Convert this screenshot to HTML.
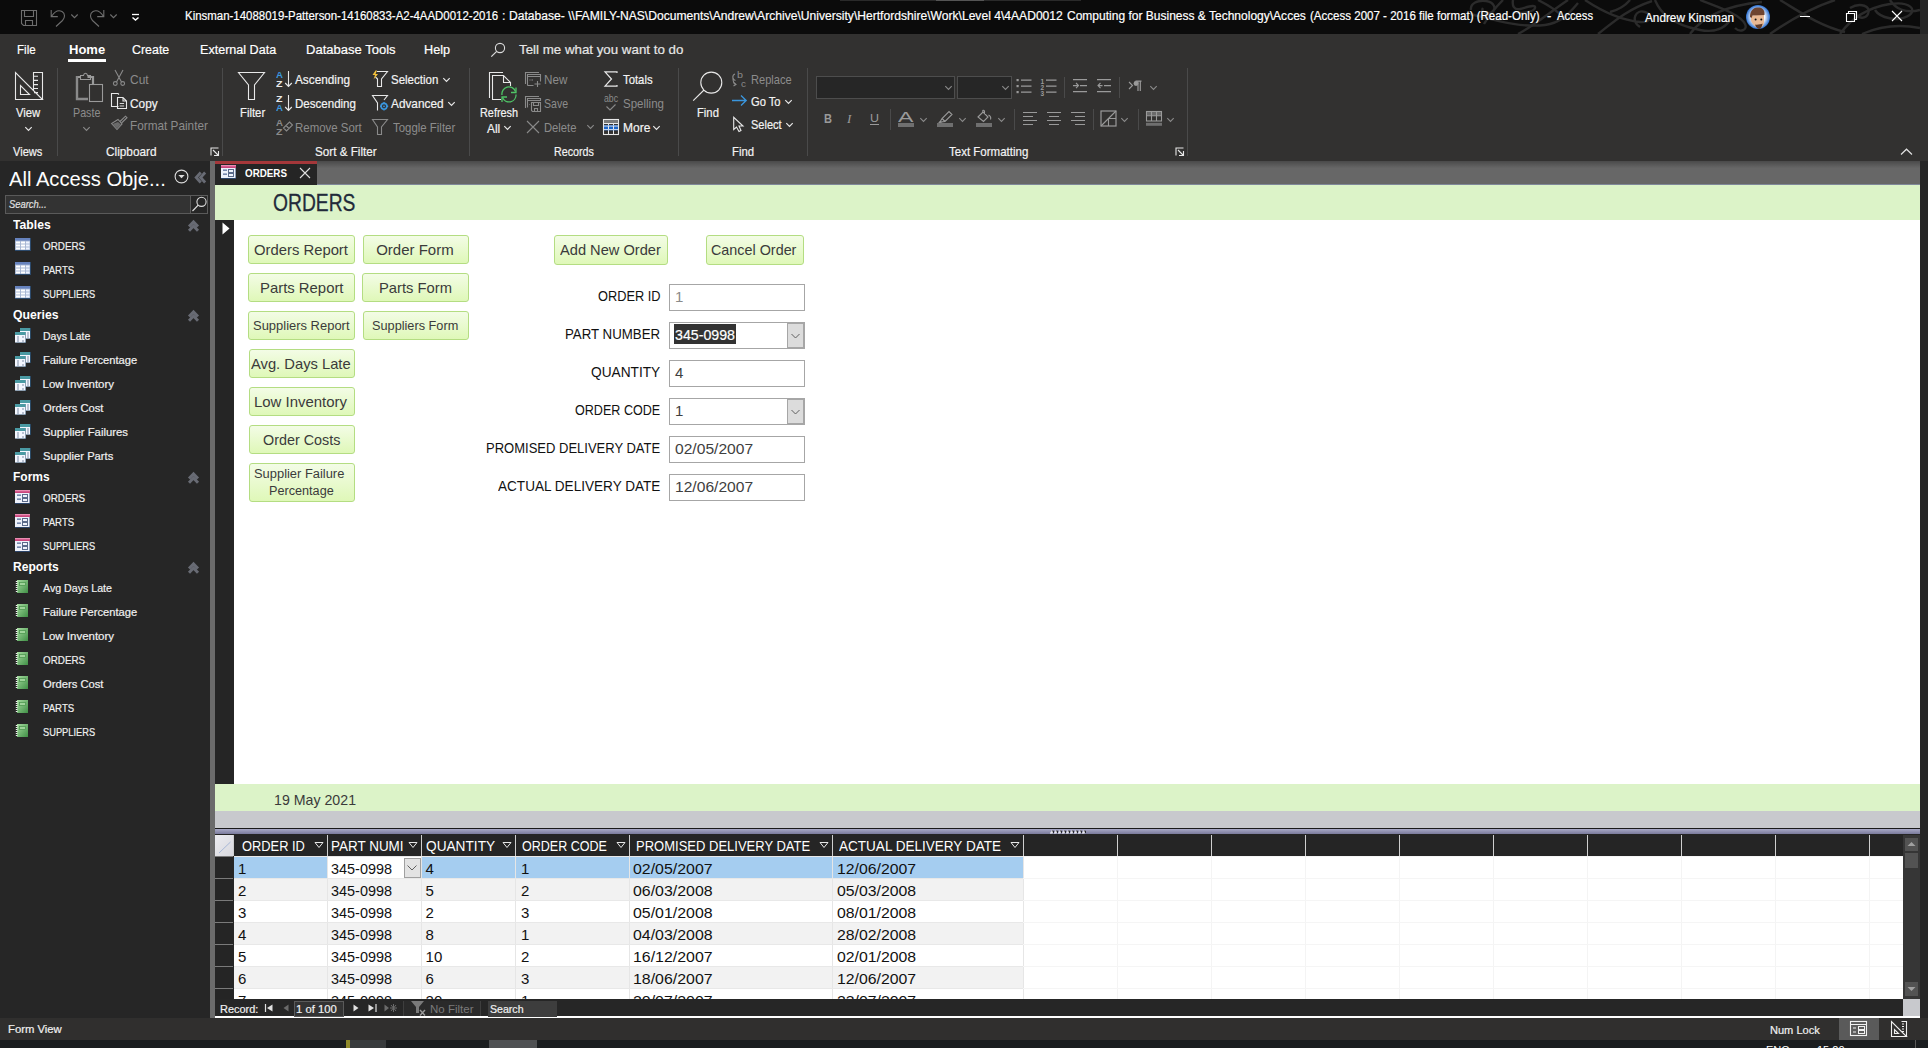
<!DOCTYPE html>
<html><head><meta charset="utf-8"><style>
html,body{margin:0;padding:0;width:1928px;height:1048px;overflow:hidden;background:#262626;}
body{position:relative;font-family:"Liberation Sans",sans-serif;}
.t{position:absolute;white-space:nowrap;line-height:1;transform-origin:0 0;}
.r{position:absolute;}
.s{position:absolute;overflow:visible;}
</style></head><body>
<div class="r" style="left:0px;top:0px;width:1920px;height:34px;background:#0b0b0b;"></div>
<div class="r" style="left:1920px;top:0px;width:8px;height:34px;background:#262626;"></div>
<div class="r" style="left:0px;top:34px;width:1928px;height:127px;background:#323130;"></div>
<div class="r" style="left:0px;top:161px;width:210px;height:857px;background:#262626;"></div>
<div class="r" style="left:210px;top:161px;width:5px;height:857px;background:#6b6b6b;"></div>
<div class="r" style="left:1920px;top:161px;width:8px;height:857px;background:#262626;"></div>
<div class="r" style="left:215px;top:161px;width:1705px;height:24px;background:linear-gradient(#4a4a4a,#676767 30%,#676767);"></div>
<div class="r" style="left:0px;top:1018px;width:1928px;height:22px;background:#302f2e;"></div>
<div class="r" style="left:0px;top:1040px;width:1928px;height:8px;background:#1b1e20;"></div>
<div class="r" style="left:346px;top:1040px;width:4px;height:8px;background:#8f8a2a;"></div>
<div class="r" style="left:350px;top:1040px;width:36px;height:8px;background:#383b3d;"></div>
<div class="r" style="left:489px;top:1040px;width:48px;height:8px;background:#4f5153;"></div>
<div class="r" style="left:1915px;top:1040px;width:1px;height:8px;background:#5a5a5a;"></div>
<div style="position:absolute;left:0;top:1040px;width:1928px;height:8px;overflow:hidden"><div class="t" style="left:1766px;top:5px;font-size:11px;color:#fff">ENG</div><div class="t" style="left:1817px;top:5px;font-size:11px;color:#fff">15:20</div></div>
<div class="r" style="left:840px;top:0px;width:241px;height:1px;background:#2a2a2a;"></div>
<div class="r" style="left:936px;top:0px;width:48px;height:1px;background:#555555;"></div>
<svg class="s" style="left:1420px;top:0px;overflow:hidden;" width="500" height="34" viewBox="0 0 500 34"><path d="M1471 10 C1470 3 1478 0 1486 1 C1494 2 1497 9 1492 12 C1488 15 1480 12 1483 8" transform="translate(-1420,0)" stroke="#2b2b2b" stroke-width="2.4" fill="none"/><path d="M1503 0 C1497 6 1490 14 1484 24" transform="translate(-1420,0)" stroke="#2b2b2b" stroke-width="2.4" fill="none"/><path d="M1470 14 C1495 20 1520 28 1545 25 C1560 23 1568 15 1578 3" transform="translate(-1420,0)" stroke="#2b2b2b" stroke-width="2.4" fill="none"/><path d="M1513 0 C1512 6 1514 10 1520 9 C1528 7 1536 4 1535 8 C1534 12 1522 14 1515 12" transform="translate(-1420,0)" stroke="#2b2b2b" stroke-width="2.4" fill="none"/><path d="M1518 34 C1535 25 1550 12 1568 0" transform="translate(-1420,0)" stroke="#2b2b2b" stroke-width="2.4" fill="none"/><path d="M1538 0 C1548 5 1556 10 1562 16" transform="translate(-1420,0)" stroke="#2b2b2b" stroke-width="2.4" fill="none"/><path d="M1585 0 C1600 10 1620 20 1640 22 C1650 23 1655 15 1645 12 C1636 9 1630 20 1640 27" transform="translate(-1420,0)" stroke="#2b2b2b" stroke-width="2.4" fill="none"/><path d="M1598 34 C1610 25 1625 10 1652 1" transform="translate(-1420,0)" stroke="#2b2b2b" stroke-width="2.4" fill="none"/><path d="M1655 0 C1660 12 1670 24 1700 30 C1715 33 1725 28 1730 20" transform="translate(-1420,0)" stroke="#2b2b2b" stroke-width="2.4" fill="none"/><path d="M1690 34 C1700 20 1720 6 1762 2" transform="translate(-1420,0)" stroke="#2b2b2b" stroke-width="2.4" fill="none"/><path d="M1700 0 C1720 8 1740 14 1745 24 C1748 30 1740 33 1735 28" transform="translate(-1420,0)" stroke="#2b2b2b" stroke-width="2.4" fill="none"/><path d="M1770 34 C1790 20 1810 8 1835 0" transform="translate(-1420,0)" stroke="#2b2b2b" stroke-width="2.4" fill="none"/><path d="M1780 0 C1800 12 1820 26 1845 32" transform="translate(-1420,0)" stroke="#2b2b2b" stroke-width="2.4" fill="none"/><path d="M1840 34 C1850 20 1865 8 1890 4 C1910 1 1918 10 1908 16 C1898 22 1880 18 1875 10" transform="translate(-1420,0)" stroke="#2b2b2b" stroke-width="2.4" fill="none"/><path d="M1850 8 C1860 2 1872 6 1868 14 C1865 20 1855 18 1856 12" transform="translate(-1420,0)" stroke="#2b2b2b" stroke-width="2.4" fill="none"/><path d="M1862 34 C1880 26 1900 24 1920 28" transform="translate(-1420,0)" stroke="#2b2b2b" stroke-width="2.4" fill="none"/><path d="M1890 0 C1895 8 1905 14 1920 10" transform="translate(-1420,0)" stroke="#2b2b2b" stroke-width="2.4" fill="none"/><path d="M1630 0 C1625 6 1618 10 1610 12" transform="translate(-1420,0)" stroke="#2b2b2b" stroke-width="2.4" fill="none"/></svg>
<div class="t" style="left:185.00px;top:10px;font-size:12.5px;color:#fff;transform:scaleX(0.9158);-webkit-text-stroke:0.2px currentColor;">Kinsman-14088019-Patterson-14160833-A2-4AAD0012-2016</div>
<div class="t" style="left:502.00px;top:10px;font-size:12.5px;color:#fff;-webkit-text-stroke:0.2px currentColor;">:</div>
<div class="t" style="left:508.90px;top:10px;font-size:12.5px;color:#fff;transform:scaleX(0.9678);-webkit-text-stroke:0.2px currentColor;">Database- \\FAMILY-NAS\Documents\Andrew\Archive\University\Hertfordshire\Work\Level 4\4AAD0012</div>
<div class="t" style="left:1066.80px;top:10px;font-size:12.5px;color:#fff;transform:scaleX(0.9610);-webkit-text-stroke:0.2px currentColor;">Computing for Business &amp; Technology\Acces</div>
<div class="t" style="left:1309.50px;top:10px;font-size:12.5px;color:#fff;transform:scaleX(0.9228);-webkit-text-stroke:0.2px currentColor;">(Access 2007 - 2016 file format) (Read-Only)</div>
<div class="t" style="left:1546.70px;top:10px;font-size:12.5px;color:#fff;transform:scaleX(1.0238);-webkit-text-stroke:0.2px currentColor;">-</div>
<div class="t" style="left:1557.00px;top:10px;font-size:12.5px;color:#fff;transform:scaleX(0.8933);-webkit-text-stroke:0.2px currentColor;">Access</div>
<div class="t" style="left:1645.00px;top:12px;font-size:12.5px;color:#fff;transform:scaleX(0.9418);-webkit-text-stroke:0.2px currentColor;">Andrew Kinsman</div>
<div class="t" style="left:17.00px;top:44px;font-size:12.5px;color:#fff;transform:scaleX(0.9254);-webkit-text-stroke:0.2px currentColor;">File</div>
<div class="t" style="left:68.50px;top:44px;font-size:12.5px;color:#fff;font-weight:bold;transform:scaleX(1.0403);">Home</div>
<div class="t" style="left:132.30px;top:44px;font-size:12.5px;color:#fff;transform:scaleX(0.9920);-webkit-text-stroke:0.2px currentColor;">Create</div>
<div class="t" style="left:200.30px;top:44px;font-size:12.5px;color:#fff;transform:scaleX(1.0053);-webkit-text-stroke:0.2px currentColor;">External Data</div>
<div class="t" style="left:306.00px;top:44px;font-size:12.5px;color:#fff;transform:scaleX(1.0419);-webkit-text-stroke:0.2px currentColor;">Database Tools</div>
<div class="t" style="left:424.00px;top:44px;font-size:12.5px;color:#fff;transform:scaleX(1.0117);-webkit-text-stroke:0.2px currentColor;">Help</div>
<div class="r" style="left:68px;top:59px;width:38px;height:3px;background:#fff;"></div>
<div class="t" style="left:519.20px;top:43px;font-size:13px;color:#e6e6e6;transform:scaleX(1.0243);-webkit-text-stroke:0.2px currentColor;">Tell me what you want to do</div>
<div class="t" style="left:16.20px;top:106px;font-size:13px;color:#f3f3f3;transform:scaleX(0.8683);-webkit-text-stroke:0.2px currentColor;">View</div>
<div class="t" style="left:13.00px;top:145px;font-size:13px;color:#f3f3f3;transform:scaleX(0.8517);-webkit-text-stroke:0.2px currentColor;">Views</div>
<div class="t" style="left:73.40px;top:106px;font-size:13px;color:#8c8c8c;transform:scaleX(0.8253);">Paste</div>
<div class="t" style="left:130.00px;top:73px;font-size:13px;color:#8c8c8c;transform:scaleX(0.9208);">Cut</div>
<div class="t" style="left:130.00px;top:97px;font-size:13px;color:#f3f3f3;transform:scaleX(0.9109);-webkit-text-stroke:0.2px currentColor;">Copy</div>
<div class="t" style="left:130.00px;top:119px;font-size:13px;color:#8c8c8c;transform:scaleX(0.9058);">Format Painter</div>
<div class="t" style="left:106.30px;top:145px;font-size:13px;color:#f3f3f3;transform:scaleX(0.9083);-webkit-text-stroke:0.2px currentColor;">Clipboard</div>
<div class="t" style="left:239.50px;top:106px;font-size:13px;color:#f3f3f3;transform:scaleX(0.8720);-webkit-text-stroke:0.2px currentColor;">Filter</div>
<div class="t" style="left:295.20px;top:73px;font-size:13px;color:#f3f3f3;transform:scaleX(0.9077);-webkit-text-stroke:0.2px currentColor;">Ascending</div>
<div class="t" style="left:295.20px;top:97px;font-size:13px;color:#f3f3f3;transform:scaleX(0.8879);-webkit-text-stroke:0.2px currentColor;">Descending</div>
<div class="t" style="left:295.20px;top:121px;font-size:13px;color:#8c8c8c;transform:scaleX(0.8801);">Remove Sort</div>
<div class="t" style="left:391.20px;top:73px;font-size:13px;color:#f3f3f3;transform:scaleX(0.8841);-webkit-text-stroke:0.2px currentColor;">Selection</div>
<div class="t" style="left:391.20px;top:97px;font-size:13px;color:#f3f3f3;transform:scaleX(0.9083);-webkit-text-stroke:0.2px currentColor;">Advanced</div>
<div class="t" style="left:392.50px;top:121px;font-size:13px;color:#8c8c8c;transform:scaleX(0.8785);">Toggle Filter</div>
<div class="t" style="left:315.30px;top:145px;font-size:13px;color:#f3f3f3;transform:scaleX(0.8980);-webkit-text-stroke:0.2px currentColor;">Sort &amp; Filter</div>
<div class="t" style="left:480.40px;top:106px;font-size:13px;color:#f3f3f3;transform:scaleX(0.8352);-webkit-text-stroke:0.2px currentColor;">Refresh</div>
<div class="t" style="left:487.20px;top:122px;font-size:13px;color:#f3f3f3;transform:scaleX(0.9167);-webkit-text-stroke:0.2px currentColor;">All</div>
<div class="t" style="left:544.30px;top:73px;font-size:13px;color:#8c8c8c;transform:scaleX(0.8966);">New</div>
<div class="t" style="left:544.30px;top:97px;font-size:13px;color:#8c8c8c;transform:scaleX(0.8108);">Save</div>
<div class="t" style="left:544.30px;top:121px;font-size:13px;color:#8c8c8c;transform:scaleX(0.8644);">Delete</div>
<div class="t" style="left:622.50px;top:73px;font-size:13px;color:#f3f3f3;transform:scaleX(0.8706);-webkit-text-stroke:0.2px currentColor;">Totals</div>
<div class="t" style="left:622.50px;top:97px;font-size:13px;color:#8c8c8c;transform:scaleX(0.8855);">Spelling</div>
<div class="t" style="left:622.50px;top:121px;font-size:13px;color:#f3f3f3;transform:scaleX(0.9223);-webkit-text-stroke:0.2px currentColor;">More</div>
<div class="t" style="left:553.80px;top:145px;font-size:13px;color:#f3f3f3;transform:scaleX(0.8244);-webkit-text-stroke:0.2px currentColor;">Records</div>
<div class="t" style="left:696.50px;top:106px;font-size:13px;color:#f3f3f3;transform:scaleX(0.8656);-webkit-text-stroke:0.2px currentColor;">Find</div>
<div class="t" style="left:751.30px;top:73px;font-size:13px;color:#8c8c8c;transform:scaleX(0.8512);">Replace</div>
<div class="t" style="left:751.30px;top:95px;font-size:13px;color:#f3f3f3;transform:scaleX(0.8580);-webkit-text-stroke:0.2px currentColor;">Go To</div>
<div class="t" style="left:751.30px;top:118px;font-size:13px;color:#f3f3f3;transform:scaleX(0.8476);-webkit-text-stroke:0.2px currentColor;">Select</div>
<div class="t" style="left:731.60px;top:145px;font-size:13px;color:#f3f3f3;transform:scaleX(0.8735);-webkit-text-stroke:0.2px currentColor;">Find</div>
<div class="t" style="left:949.20px;top:145px;font-size:13px;color:#f3f3f3;transform:scaleX(0.8850);-webkit-text-stroke:0.2px currentColor;">Text Formatting</div>
<div class="t" style="left:8.70px;top:168px;font-size:21px;color:#fefefe;transform:scaleX(0.9596);">All Access Obje...</div>
<div class="r" style="left:5px;top:195px;width:203px;height:19px;background:#333333;border:1px solid #5a5a5a;box-sizing:border-box;"></div>
<div class="t" style="left:8.50px;top:199px;font-size:11px;color:#e0e0e0;font-style:italic;transform:scaleX(0.8523);-webkit-text-stroke:0.2px currentColor;">Search...</div>
<div class="t" style="left:13.40px;top:218px;font-size:13px;color:#fff;font-weight:bold;transform:scaleX(0.9378);">Tables</div>
<div class="t" style="left:42.50px;top:241px;font-size:11.5px;color:#f0f0f0;transform:scaleX(0.8577);-webkit-text-stroke:0.2px currentColor;">ORDERS</div>
<div class="t" style="left:42.50px;top:265px;font-size:11.5px;color:#f0f0f0;transform:scaleX(0.8365);-webkit-text-stroke:0.2px currentColor;">PARTS</div>
<div class="t" style="left:42.50px;top:289px;font-size:11.5px;color:#f0f0f0;transform:scaleX(0.8065);-webkit-text-stroke:0.2px currentColor;">SUPPLIERS</div>
<div class="t" style="left:13.40px;top:308px;font-size:13px;color:#fff;font-weight:bold;transform:scaleX(0.9421);">Queries</div>
<div class="t" style="left:42.50px;top:331px;font-size:11.5px;color:#f0f0f0;transform:scaleX(0.9131);-webkit-text-stroke:0.2px currentColor;">Days Late</div>
<div class="t" style="left:42.50px;top:355px;font-size:11.5px;color:#f0f0f0;transform:scaleX(0.9691);-webkit-text-stroke:0.2px currentColor;">Failure Percentage</div>
<div class="t" style="left:42.50px;top:379px;font-size:11.5px;color:#f0f0f0;-webkit-text-stroke:0.2px currentColor;">Low Inventory</div>
<div class="t" style="left:42.50px;top:403px;font-size:11.5px;color:#f0f0f0;transform:scaleX(0.9758);-webkit-text-stroke:0.2px currentColor;">Orders Cost</div>
<div class="t" style="left:42.50px;top:427px;font-size:11.5px;color:#f0f0f0;transform:scaleX(0.9849);-webkit-text-stroke:0.2px currentColor;">Supplier Failures</div>
<div class="t" style="left:42.50px;top:451px;font-size:11.5px;color:#f0f0f0;transform:scaleX(0.9723);-webkit-text-stroke:0.2px currentColor;">Supplier Parts</div>
<div class="t" style="left:13.40px;top:470px;font-size:13px;color:#fff;font-weight:bold;transform:scaleX(0.9219);">Forms</div>
<div class="t" style="left:42.50px;top:493px;font-size:11.5px;color:#f0f0f0;transform:scaleX(0.8577);-webkit-text-stroke:0.2px currentColor;">ORDERS</div>
<div class="t" style="left:42.50px;top:517px;font-size:11.5px;color:#f0f0f0;transform:scaleX(0.8365);-webkit-text-stroke:0.2px currentColor;">PARTS</div>
<div class="t" style="left:42.50px;top:541px;font-size:11.5px;color:#f0f0f0;transform:scaleX(0.8065);-webkit-text-stroke:0.2px currentColor;">SUPPLIERS</div>
<div class="t" style="left:13.40px;top:560px;font-size:13px;color:#fff;font-weight:bold;transform:scaleX(0.9287);">Reports</div>
<div class="t" style="left:42.50px;top:583px;font-size:11.5px;color:#f0f0f0;transform:scaleX(0.9249);-webkit-text-stroke:0.2px currentColor;">Avg Days Late</div>
<div class="t" style="left:42.50px;top:607px;font-size:11.5px;color:#f0f0f0;transform:scaleX(0.9691);-webkit-text-stroke:0.2px currentColor;">Failure Percentage</div>
<div class="t" style="left:42.50px;top:631px;font-size:11.5px;color:#f0f0f0;-webkit-text-stroke:0.2px currentColor;">Low Inventory</div>
<div class="t" style="left:42.50px;top:655px;font-size:11.5px;color:#f0f0f0;transform:scaleX(0.8577);-webkit-text-stroke:0.2px currentColor;">ORDERS</div>
<div class="t" style="left:42.50px;top:679px;font-size:11.5px;color:#f0f0f0;transform:scaleX(0.9758);-webkit-text-stroke:0.2px currentColor;">Orders Cost</div>
<div class="t" style="left:42.50px;top:703px;font-size:11.5px;color:#f0f0f0;transform:scaleX(0.8365);-webkit-text-stroke:0.2px currentColor;">PARTS</div>
<div class="t" style="left:42.50px;top:727px;font-size:11.5px;color:#f0f0f0;transform:scaleX(0.8065);-webkit-text-stroke:0.2px currentColor;">SUPPLIERS</div>
<div class="r" style="left:215px;top:161px;width:102px;height:3px;background:#a4373a;"></div>
<div class="r" style="left:317px;top:184px;width:1603px;height:1px;background:#80889a;"></div>
<div class="r" style="left:215px;top:164px;width:102px;height:21px;background:#252525;"></div>
<div class="t" style="left:245.00px;top:168px;font-size:11px;color:#fff;font-weight:bold;transform:scaleX(0.8917);">ORDERS</div>
<div class="r" style="left:215px;top:185px;width:1705px;height:35px;background:#dcf3c8;"></div>
<div class="r" style="left:215px;top:220px;width:1705px;height:564px;background:#ffffff;"></div>
<div class="r" style="left:215px;top:220px;width:19px;height:564px;background:#252525;"></div>
<div class="t" style="left:272.70px;top:192px;font-size:23px;color:#222a3a;transform:scaleX(0.8374);-webkit-text-stroke:0.3px currentColor;">ORDERS</div>
<div class="r" style="left:215px;top:784px;width:1705px;height:27px;background:#dcf3c8;"></div>
<div class="t" style="left:274.00px;top:792px;font-size:15px;color:#3a3a3a;transform:scaleX(0.9458);">19 May 2021</div>
<div class="r" style="left:215px;top:811px;width:1705px;height:17px;background:#c8c9cd;"></div>
<div class="r" style="left:215px;top:828px;width:1705px;height:1px;background:#1a1a1a;"></div>
<div class="r" style="left:215px;top:829px;width:1705px;height:5px;background:linear-gradient(#a9a9c6,#7a7b9c);"></div>
<div class="r" style="left:248px;top:235px;width:107px;height:29px;background:linear-gradient(#f3fce6,#dff8b8);border:1px solid #b4dd82;border-radius:3px;box-sizing:border-box;"></div>
<div class="t" style="left:254.30px;top:242px;font-size:15px;color:#3b3b3b;transform:scaleX(0.9884);">Orders Report</div>
<div class="r" style="left:363px;top:235px;width:106px;height:29px;background:linear-gradient(#f3fce6,#dff8b8);border:1px solid #b4dd82;border-radius:3px;box-sizing:border-box;"></div>
<div class="t" style="left:376.20px;top:242px;font-size:15px;color:#3b3b3b;">Order Form</div>
<div class="r" style="left:248px;top:273px;width:107px;height:29px;background:linear-gradient(#f3fce6,#dff8b8);border:1px solid #b4dd82;border-radius:3px;box-sizing:border-box;"></div>
<div class="t" style="left:259.50px;top:280px;font-size:15px;color:#3b3b3b;transform:scaleX(0.9917);">Parts Report</div>
<div class="r" style="left:362px;top:273px;width:107px;height:29px;background:linear-gradient(#f3fce6,#dff8b8);border:1px solid #b4dd82;border-radius:3px;box-sizing:border-box;"></div>
<div class="t" style="left:378.50px;top:280px;font-size:15px;color:#3b3b3b;transform:scaleX(0.9838);">Parts Form</div>
<div class="r" style="left:248px;top:311px;width:107px;height:29px;background:linear-gradient(#f3fce6,#dff8b8);border:1px solid #b4dd82;border-radius:3px;box-sizing:border-box;"></div>
<div class="t" style="left:253.00px;top:320px;font-size:12.5px;color:#3b3b3b;transform:scaleX(1.0365);">Suppliers Report</div>
<div class="r" style="left:363px;top:311px;width:106px;height:29px;background:linear-gradient(#f3fce6,#dff8b8);border:1px solid #b4dd82;border-radius:3px;box-sizing:border-box;"></div>
<div class="t" style="left:372.30px;top:320px;font-size:12.5px;color:#3b3b3b;transform:scaleX(1.0177);">Suppliers Form</div>
<div class="r" style="left:249px;top:349px;width:106px;height:29px;background:linear-gradient(#f3fce6,#dff8b8);border:1px solid #b4dd82;border-radius:3px;box-sizing:border-box;"></div>
<div class="t" style="left:251.40px;top:356.2px;font-size:15px;color:#3b3b3b;transform:scaleX(0.9822);">Avg. Days Late</div>
<div class="r" style="left:249px;top:387px;width:106px;height:29px;background:linear-gradient(#f3fce6,#dff8b8);border:1px solid #b4dd82;border-radius:3px;box-sizing:border-box;"></div>
<div class="t" style="left:254.00px;top:394px;font-size:15px;color:#3b3b3b;transform:scaleX(0.9957);">Low Inventory</div>
<div class="r" style="left:249px;top:425px;width:106px;height:29px;background:linear-gradient(#f3fce6,#dff8b8);border:1px solid #b4dd82;border-radius:3px;box-sizing:border-box;"></div>
<div class="t" style="left:262.50px;top:432px;font-size:15px;color:#3b3b3b;transform:scaleX(0.9580);">Order Costs</div>
<div class="r" style="left:249px;top:463px;width:106px;height:39px;background:linear-gradient(#f3fce6,#dff8b8);border:1px solid #b4dd82;border-radius:3px;box-sizing:border-box;"></div>
<div class="t" style="left:254.30px;top:468px;font-size:12.5px;color:#3b3b3b;transform:scaleX(1.0320);">Supplier Failure</div>
<div class="t" style="left:269.00px;top:485px;font-size:12.5px;color:#3b3b3b;transform:scaleX(1.0125);">Percentage</div>
<div class="r" style="left:554px;top:235px;width:114px;height:30px;background:linear-gradient(#f3fce6,#dff8b8);border:1px solid #b4dd82;border-radius:3px;box-sizing:border-box;"></div>
<div class="t" style="left:559.60px;top:242.2px;font-size:15px;color:#3b3b3b;transform:scaleX(0.9758);">Add New Order</div>
<div class="r" style="left:706px;top:235px;width:98px;height:30px;background:linear-gradient(#f3fce6,#dff8b8);border:1px solid #b4dd82;border-radius:3px;box-sizing:border-box;"></div>
<div class="t" style="left:711.40px;top:242.2px;font-size:15px;color:#3b3b3b;transform:scaleX(0.9574);">Cancel Order</div>
<div class="r" style="left:669px;top:284px;width:136px;height:27px;background:#fff;border:1px solid #a6a6a6;box-sizing:border-box;"></div>
<div class="t" style="left:598.00px;top:288px;font-size:15px;color:#111;transform:scaleX(0.8527);">ORDER ID</div>
<div class="t" style="left:675.00px;top:289px;font-size:15px;color:#8a8a8a;">1</div>
<div class="r" style="left:669px;top:322px;width:136px;height:27px;background:#fff;border:1px solid #a6a6a6;box-sizing:border-box;"></div>
<div class="t" style="left:565.40px;top:326px;font-size:15px;color:#111;transform:scaleX(0.8847);">PART NUMBER</div>
<div class="r" style="left:787px;top:323px;width:17px;height:25px;background:#dcdcdc;border:1px solid #a6a6a6;box-sizing:border-box;"></div>
<svg class="s" style="left:790px;top:332px;" width="11" height="8" viewBox="0 0 11 8"><path d="M1.5 2 L5.5 6 L9.5 2" stroke="#606060" stroke-width="1" fill="none"/></svg>
<div class="r" style="left:674px;top:324px;width:62px;height:20px;background:#333;"></div>
<div class="t" style="left:675.00px;top:327px;font-size:15px;color:#fff;transform:scaleX(0.9464);-webkit-text-stroke:0.2px currentColor;">345-0998</div>
<div class="r" style="left:669px;top:360px;width:136px;height:27px;background:#fff;border:1px solid #a6a6a6;box-sizing:border-box;"></div>
<div class="t" style="left:591.30px;top:364px;font-size:15px;color:#111;transform:scaleX(0.9129);">QUANTITY</div>
<div class="t" style="left:675.00px;top:365px;font-size:15px;color:#404040;">4</div>
<div class="r" style="left:669px;top:398px;width:136px;height:27px;background:#fff;border:1px solid #a6a6a6;box-sizing:border-box;"></div>
<div class="t" style="left:575.30px;top:402px;font-size:15px;color:#111;transform:scaleX(0.8378);">ORDER CODE</div>
<div class="r" style="left:787px;top:399px;width:17px;height:25px;background:#dcdcdc;border:1px solid #a6a6a6;box-sizing:border-box;"></div>
<svg class="s" style="left:790px;top:408px;" width="11" height="8" viewBox="0 0 11 8"><path d="M1.5 2 L5.5 6 L9.5 2" stroke="#606060" stroke-width="1" fill="none"/></svg>
<div class="t" style="left:675.00px;top:403px;font-size:15px;color:#404040;">1</div>
<div class="r" style="left:669px;top:436px;width:136px;height:27px;background:#fff;border:1px solid #a6a6a6;box-sizing:border-box;"></div>
<div class="t" style="left:486.30px;top:440px;font-size:15px;color:#111;transform:scaleX(0.8671);">PROMISED DELIVERY DATE</div>
<div class="t" style="left:675.00px;top:441px;font-size:15px;color:#404040;transform:scaleX(1.0413);">02/05/2007</div>
<div class="r" style="left:669px;top:474px;width:136px;height:27px;background:#fff;border:1px solid #a6a6a6;box-sizing:border-box;"></div>
<div class="t" style="left:498.10px;top:478px;font-size:15px;color:#111;transform:scaleX(0.9047);">ACTUAL DELIVERY DATE</div>
<div class="t" style="left:675.00px;top:479px;font-size:15px;color:#404040;transform:scaleX(1.0413);">12/06/2007</div>
<div class="r" style="left:215px;top:834px;width:1688px;height:22px;background:#252525;"></div>
<div class="r" style="left:215px;top:835px;width:19px;height:21px;background:linear-gradient(135deg,#ececf0,#d8d8de);"></div>
<div class="r" style="left:234px;top:856px;width:1669px;height:143px;background:#ffffff;"></div>
<div class="r" style="left:234px;top:857px;width:789px;height:21px;background:#a5cdf0;"></div>
<div class="r" style="left:328px;top:857px;width:93px;height:21px;background:#fff;"></div>
<div class="r" style="left:215px;top:857px;width:18px;height:21px;background:#252525;"></div>
<div class="r" style="left:215px;top:856px;width:18px;height:1px;background:#7a7a7a;"></div>
<div class="r" style="left:234px;top:879px;width:789px;height:21px;background:#f2f2f2;"></div>
<div class="r" style="left:215px;top:879px;width:18px;height:21px;background:#252525;"></div>
<div class="r" style="left:215px;top:878px;width:18px;height:1px;background:#7a7a7a;"></div>
<div class="r" style="left:215px;top:901px;width:18px;height:21px;background:#252525;"></div>
<div class="r" style="left:215px;top:900px;width:18px;height:1px;background:#7a7a7a;"></div>
<div class="r" style="left:234px;top:923px;width:789px;height:21px;background:#f2f2f2;"></div>
<div class="r" style="left:215px;top:923px;width:18px;height:21px;background:#252525;"></div>
<div class="r" style="left:215px;top:922px;width:18px;height:1px;background:#7a7a7a;"></div>
<div class="r" style="left:215px;top:945px;width:18px;height:21px;background:#252525;"></div>
<div class="r" style="left:215px;top:944px;width:18px;height:1px;background:#7a7a7a;"></div>
<div class="r" style="left:234px;top:967px;width:789px;height:21px;background:#f2f2f2;"></div>
<div class="r" style="left:215px;top:967px;width:18px;height:21px;background:#252525;"></div>
<div class="r" style="left:215px;top:966px;width:18px;height:1px;background:#7a7a7a;"></div>
<div class="r" style="left:215px;top:989px;width:18px;height:10px;background:#252525;"></div>
<div class="r" style="left:215px;top:988px;width:18px;height:1px;background:#7a7a7a;"></div>
<div class="t" style="left:238.00px;top:861px;font-size:15px;color:#111;">1</div>
<div class="t" style="left:331.40px;top:861px;font-size:15px;color:#111;transform:scaleX(0.9621);">345-0998</div>
<div class="t" style="left:425.60px;top:861px;font-size:15px;color:#111;">4</div>
<div class="t" style="left:521.00px;top:861px;font-size:15px;color:#111;">1</div>
<div class="t" style="left:633.00px;top:861px;font-size:15px;color:#111;transform:scaleX(1.0599);">02/05/2007</div>
<div class="t" style="left:836.60px;top:861px;font-size:15px;color:#111;transform:scaleX(1.0533);">12/06/2007</div>
<div class="t" style="left:238.00px;top:883px;font-size:15px;color:#111;">2</div>
<div class="t" style="left:331.40px;top:883px;font-size:15px;color:#111;transform:scaleX(0.9621);">345-0998</div>
<div class="t" style="left:425.60px;top:883px;font-size:15px;color:#111;">5</div>
<div class="t" style="left:521.00px;top:883px;font-size:15px;color:#111;">2</div>
<div class="t" style="left:633.00px;top:883px;font-size:15px;color:#111;transform:scaleX(1.0599);">06/03/2008</div>
<div class="t" style="left:836.60px;top:883px;font-size:15px;color:#111;transform:scaleX(1.0533);">05/03/2008</div>
<div class="t" style="left:238.00px;top:905px;font-size:15px;color:#111;">3</div>
<div class="t" style="left:331.40px;top:905px;font-size:15px;color:#111;transform:scaleX(0.9621);">345-0998</div>
<div class="t" style="left:425.60px;top:905px;font-size:15px;color:#111;">2</div>
<div class="t" style="left:521.00px;top:905px;font-size:15px;color:#111;">3</div>
<div class="t" style="left:633.00px;top:905px;font-size:15px;color:#111;transform:scaleX(1.0599);">05/01/2008</div>
<div class="t" style="left:836.60px;top:905px;font-size:15px;color:#111;transform:scaleX(1.0533);">08/01/2008</div>
<div class="t" style="left:238.00px;top:927px;font-size:15px;color:#111;">4</div>
<div class="t" style="left:331.40px;top:927px;font-size:15px;color:#111;transform:scaleX(0.9621);">345-0998</div>
<div class="t" style="left:425.60px;top:927px;font-size:15px;color:#111;">8</div>
<div class="t" style="left:521.00px;top:927px;font-size:15px;color:#111;">1</div>
<div class="t" style="left:633.00px;top:927px;font-size:15px;color:#111;transform:scaleX(1.0599);">04/03/2008</div>
<div class="t" style="left:836.60px;top:927px;font-size:15px;color:#111;transform:scaleX(1.0533);">28/02/2008</div>
<div class="t" style="left:238.00px;top:949px;font-size:15px;color:#111;">5</div>
<div class="t" style="left:331.40px;top:949px;font-size:15px;color:#111;transform:scaleX(0.9621);">345-0998</div>
<div class="t" style="left:425.60px;top:949px;font-size:15px;color:#111;">10</div>
<div class="t" style="left:521.00px;top:949px;font-size:15px;color:#111;">2</div>
<div class="t" style="left:633.00px;top:949px;font-size:15px;color:#111;transform:scaleX(1.0599);">16/12/2007</div>
<div class="t" style="left:836.60px;top:949px;font-size:15px;color:#111;transform:scaleX(1.0533);">02/01/2008</div>
<div class="t" style="left:238.00px;top:971px;font-size:15px;color:#111;">6</div>
<div class="t" style="left:331.40px;top:971px;font-size:15px;color:#111;transform:scaleX(0.9621);">345-0998</div>
<div class="t" style="left:425.60px;top:971px;font-size:15px;color:#111;">6</div>
<div class="t" style="left:521.00px;top:971px;font-size:15px;color:#111;">3</div>
<div class="t" style="left:633.00px;top:971px;font-size:15px;color:#111;transform:scaleX(1.0599);">18/06/2007</div>
<div class="t" style="left:836.60px;top:971px;font-size:15px;color:#111;transform:scaleX(1.0533);">12/06/2007</div>
<div class="t" style="left:238.00px;top:993px;font-size:15px;color:#111;">7</div>
<div class="t" style="left:331.40px;top:993px;font-size:15px;color:#111;transform:scaleX(0.9621);">345-0998</div>
<div class="t" style="left:425.60px;top:993px;font-size:15px;color:#111;">20</div>
<div class="t" style="left:521.00px;top:993px;font-size:15px;color:#111;">1</div>
<div class="t" style="left:633.00px;top:993px;font-size:15px;color:#111;transform:scaleX(1.0599);">20/07/2007</div>
<div class="t" style="left:836.60px;top:993px;font-size:15px;color:#111;transform:scaleX(1.0533);">23/07/2007</div>
<div class="r" style="left:327px;top:856px;width:1px;height:143px;background:#e6e6e6;"></div>
<div class="r" style="left:421px;top:856px;width:1px;height:143px;background:#e6e6e6;"></div>
<div class="r" style="left:515px;top:856px;width:1px;height:143px;background:#e6e6e6;"></div>
<div class="r" style="left:629px;top:856px;width:1px;height:143px;background:#e6e6e6;"></div>
<div class="r" style="left:832px;top:856px;width:1px;height:143px;background:#e6e6e6;"></div>
<div class="r" style="left:1023px;top:856px;width:1px;height:143px;background:#e6e6e6;"></div>
<div class="r" style="left:1117px;top:856px;width:1px;height:143px;background:#f4f4f4;"></div>
<div class="r" style="left:1211px;top:856px;width:1px;height:143px;background:#f4f4f4;"></div>
<div class="r" style="left:1305px;top:856px;width:1px;height:143px;background:#f4f4f4;"></div>
<div class="r" style="left:1399px;top:856px;width:1px;height:143px;background:#f4f4f4;"></div>
<div class="r" style="left:1493px;top:856px;width:1px;height:143px;background:#f4f4f4;"></div>
<div class="r" style="left:1587px;top:856px;width:1px;height:143px;background:#f4f4f4;"></div>
<div class="r" style="left:1681px;top:856px;width:1px;height:143px;background:#f4f4f4;"></div>
<div class="r" style="left:1775px;top:856px;width:1px;height:143px;background:#f4f4f4;"></div>
<div class="r" style="left:1869px;top:856px;width:1px;height:143px;background:#f4f4f4;"></div>
<div class="r" style="left:234px;top:856px;width:789px;height:1px;background:#e8e8e8;"></div>
<div class="r" style="left:1023px;top:856px;width:880px;height:1px;background:#f5f5f5;"></div>
<div class="r" style="left:234px;top:878px;width:789px;height:1px;background:#e8e8e8;"></div>
<div class="r" style="left:1023px;top:878px;width:880px;height:1px;background:#f5f5f5;"></div>
<div class="r" style="left:234px;top:900px;width:789px;height:1px;background:#e8e8e8;"></div>
<div class="r" style="left:1023px;top:900px;width:880px;height:1px;background:#f5f5f5;"></div>
<div class="r" style="left:234px;top:922px;width:789px;height:1px;background:#e8e8e8;"></div>
<div class="r" style="left:1023px;top:922px;width:880px;height:1px;background:#f5f5f5;"></div>
<div class="r" style="left:234px;top:944px;width:789px;height:1px;background:#e8e8e8;"></div>
<div class="r" style="left:1023px;top:944px;width:880px;height:1px;background:#f5f5f5;"></div>
<div class="r" style="left:234px;top:966px;width:789px;height:1px;background:#e8e8e8;"></div>
<div class="r" style="left:1023px;top:966px;width:880px;height:1px;background:#f5f5f5;"></div>
<div class="r" style="left:234px;top:988px;width:789px;height:1px;background:#e8e8e8;"></div>
<div class="r" style="left:1023px;top:988px;width:880px;height:1px;background:#f5f5f5;"></div>
<div class="t" style="left:242.30px;top:839px;font-size:14.5px;color:#fefefe;transform:scaleX(0.8872);">ORDER ID</div>
<div class="t" style="left:331.40px;top:839px;font-size:14.5px;color:#fefefe;transform:scaleX(0.9284);">PART NUMI</div>
<div class="t" style="left:426.20px;top:839px;font-size:14.5px;color:#fefefe;transform:scaleX(0.9427);">QUANTITY</div>
<div class="t" style="left:522.30px;top:839px;font-size:14.5px;color:#fefefe;transform:scaleX(0.8647);">ORDER CODE</div>
<div class="t" style="left:636.20px;top:839px;font-size:14.5px;color:#fefefe;transform:scaleX(0.8970);">PROMISED DELIVERY DATE</div>
<div class="t" style="left:839.00px;top:839px;font-size:14.5px;color:#fefefe;transform:scaleX(0.9337);">ACTUAL DELIVERY DATE</div>
<div class="r" style="left:233px;top:835px;width:1px;height:21px;background:#cfcfcf;"></div>
<div class="r" style="left:327px;top:835px;width:1px;height:21px;background:#cfcfcf;"></div>
<div class="r" style="left:421px;top:835px;width:1px;height:21px;background:#cfcfcf;"></div>
<div class="r" style="left:515px;top:835px;width:1px;height:21px;background:#cfcfcf;"></div>
<div class="r" style="left:629px;top:835px;width:1px;height:21px;background:#cfcfcf;"></div>
<div class="r" style="left:832px;top:835px;width:1px;height:21px;background:#cfcfcf;"></div>
<div class="r" style="left:1023px;top:835px;width:1px;height:21px;background:#cfcfcf;"></div>
<div class="r" style="left:1117px;top:835px;width:1px;height:21px;background:#cfcfcf;"></div>
<div class="r" style="left:1211px;top:835px;width:1px;height:21px;background:#cfcfcf;"></div>
<div class="r" style="left:1305px;top:835px;width:1px;height:21px;background:#cfcfcf;"></div>
<div class="r" style="left:1399px;top:835px;width:1px;height:21px;background:#cfcfcf;"></div>
<div class="r" style="left:1493px;top:835px;width:1px;height:21px;background:#cfcfcf;"></div>
<div class="r" style="left:1587px;top:835px;width:1px;height:21px;background:#cfcfcf;"></div>
<div class="r" style="left:1681px;top:835px;width:1px;height:21px;background:#cfcfcf;"></div>
<div class="r" style="left:1775px;top:835px;width:1px;height:21px;background:#cfcfcf;"></div>
<div class="r" style="left:1869px;top:835px;width:1px;height:21px;background:#cfcfcf;"></div>
<div class="r" style="left:215px;top:999px;width:1705px;height:17px;background:#262626;"></div>
<div class="r" style="left:215px;top:1016px;width:1705px;height:2px;background:#ffffff;"></div>
<div class="r" style="left:1903px;top:834px;width:17px;height:165px;background:#3a3a3a;"></div>
<div class="t" style="left:220.00px;top:1004px;font-size:11px;color:#f0f0f0;transform:scaleX(0.9948);-webkit-text-stroke:0.2px currentColor;">Record:</div>
<div class="r" style="left:294px;top:1001px;width:50px;height:16px;background:#333;border:1px solid #5a5a5a;box-sizing:border-box;"></div>
<div class="t" style="left:296.30px;top:1004px;font-size:11px;color:#f0f0f0;transform:scaleX(1.0226);-webkit-text-stroke:0.2px currentColor;">1 of 100</div>
<div class="r" style="left:404px;top:1001px;width:76px;height:15px;background:#2a2a2a;"></div>
<div class="t" style="left:429.50px;top:1004px;font-size:11px;color:#7a7a7a;transform:scaleX(1.0457);">No Filter</div>
<div class="r" style="left:488px;top:1001px;width:69px;height:16px;background:#3d3d3d;"></div>
<div class="t" style="left:490.20px;top:1004px;font-size:11px;color:#f0f0f0;transform:scaleX(0.9628);-webkit-text-stroke:0.2px currentColor;">Search</div>
<div class="r" style="left:1903px;top:999px;width:17px;height:17px;background:#c8c9cd;"></div>
<div class="t" style="left:7.80px;top:1024px;font-size:11px;color:#f0f0f0;transform:scaleX(1.0267);-webkit-text-stroke:0.2px currentColor;">Form View</div>
<div class="t" style="left:1769.80px;top:1025px;font-size:11px;color:#f0f0f0;transform:scaleX(1.0040);-webkit-text-stroke:0.2px currentColor;">Num Lock</div>
<div class="r" style="left:1839px;top:1018px;width:40px;height:22px;background:#5a5a5a;"></div>
<svg class="s" style="left:20px;top:9px;" width="18" height="18" viewBox="0 0 18 18"><path d="M1.5 1.5 H16.5 V16.5 H3.5 L1.5 14.5 Z M4.5 1.5 V7.5 H13.5 V1.5 M5.5 16.5 V11.5 H12.5 V16.5" stroke="#6e6e6e" stroke-width="1.1" fill="none"/></svg>
<svg class="s" style="left:50px;top:9px;" width="16" height="18" viewBox="0 0 16 18"><path d="M1.2 1 V7.6 H7.8 M1.6 7.2 C4 3.5 8 0.5 12 2.5 C15.5 4.5 15 9 12.5 11.5 L6 17.5" stroke="#6e6e6e" stroke-width="1.1" fill="none"/></svg>
<svg class="s" style="left:70px;top:13px;" width="9" height="7" viewBox="0 0 9 7"><path d="M1.3 1.5 L4.5 4.7 L7.7 1.5" stroke="#6e6e6e" stroke-width="1.1" fill="none"/></svg>
<svg class="s" style="left:89px;top:9px;" width="16" height="18" viewBox="0 0 16 18"><path d="M14.8 1 V7.6 H8.2 M14.4 7.2 C12 3.5 8 0.5 4 2.5 C0.5 4.5 1 9 3.5 11.5 L10 17.5" stroke="#6e6e6e" stroke-width="1.1" fill="none"/></svg>
<svg class="s" style="left:109px;top:13px;" width="9" height="7" viewBox="0 0 9 7"><path d="M1.3 1.5 L4.5 4.7 L7.7 1.5" stroke="#6e6e6e" stroke-width="1.1" fill="none"/></svg>
<svg class="s" style="left:131px;top:12px;" width="9" height="9" viewBox="0 0 9 9"><path d="M1 2.5 H8" stroke="#fff" stroke-width="1.3"/><path d="M1.5 5.5 L4.5 8 L7.5 5.5" stroke="#fff" stroke-width="1.5" fill="none"/></svg>
<svg class="s" style="left:1746px;top:5px;" width="24" height="24" viewBox="0 0 24 24"><defs><radialGradient id="av" cx="50%" cy="50%" r="50%"><stop offset="55%" stop-color="#f4f8ff"/><stop offset="100%" stop-color="#2a6fd0"/></radialGradient></defs><circle cx="12" cy="12" r="12" fill="url(#av)"/><path d="M5 11 L18 8.5 V18 C17 21 15 23.5 13 23.5 C10 22.5 7 20 5 16 Z" fill="#e9b994"/><path d="M4 12 C4 6 7 3 11 2.5 C15 2 18.5 4 18.5 8 L18.5 10 L6.5 10.5 L5.5 13 Z" fill="#6e4430"/><path d="M9 19.5 C10 23 12 24 13.5 24 C15 23.5 16.5 21 16.5 18.5 C15 19.5 11 20 9 19.5Z" fill="#5e3a28"/><circle cx="9.6" cy="14.5" r="1" fill="#111"/><circle cx="15.3" cy="14.5" r="1" fill="#111"/></svg>
<div class="r" style="left:1800px;top:16px;width:10px;height:1px;background:#fff;"></div>
<svg class="s" style="left:1845px;top:10px;" width="13" height="12" viewBox="0 0 13 12"><path d="M3.5 3.5 V1.5 H11.5 V9.5 H9.5 M1.5 3.5 H9.5 V11.5 H1.5 Z" stroke="#fff" stroke-width="1.1" fill="none"/></svg>
<svg class="s" style="left:1891px;top:10px;" width="12" height="12" viewBox="0 0 12 12"><path d="M1 1 L11 11 M11 1 L1 11" stroke="#fff" stroke-width="1.1"/></svg>
<div class="r" style="left:57px;top:68px;width:1px;height:88px;background:#4a4a4a;"></div>
<div class="r" style="left:222px;top:68px;width:1px;height:88px;background:#4a4a4a;"></div>
<div class="r" style="left:469px;top:68px;width:1px;height:88px;background:#4a4a4a;"></div>
<div class="r" style="left:678px;top:68px;width:1px;height:88px;background:#4a4a4a;"></div>
<div class="r" style="left:807px;top:68px;width:1px;height:88px;background:#4a4a4a;"></div>
<div class="r" style="left:1187px;top:68px;width:1px;height:88px;background:#4a4a4a;"></div>
<svg class="s" style="left:490px;top:42px;" width="16" height="16" viewBox="0 0 16 16"><circle cx="10" cy="6" r="4.6" stroke="#dcdcdc" stroke-width="1.1" fill="none"/><path d="M6.7 9.3 L1.3 14.7" stroke="#dcdcdc" stroke-width="1.2"/></svg>
<svg class="s" style="left:14px;top:71px;" width="30" height="30" viewBox="0 0 30 30"><path d="M1.5 1.5 V28.5 H28.5 Z M6.5 14.5 V23.5 H15.5 Z M19.5 19.5 V1.5 H28.5 V28.5 M20 5.3 H24 M20 9.4 H24 M20 13.6 H24 M20 17.5 H24 M20 21.6 H24" stroke="#e8e8e8" stroke-width="1.1" fill="none"/></svg>
<svg class="s" style="left:24px;top:126px;" width="9" height="6" viewBox="0 0 9 6"><path d="M1.3 1.2 L4.5 4.4 L7.7 1.2" stroke="#e8e8e8" stroke-width="1.2" fill="none"/></svg>
<svg class="s" style="left:74px;top:70px;" width="30" height="34" viewBox="0 0 30 34"><path d="M3 7 H6.5 M13.5 7 H19 V14" stroke="#9a9a9a" stroke-width="2.2" fill="none"/><path d="M3 6 V29 H14" stroke="#8a8a8a" stroke-width="2.4" fill="none"/><path d="M6.5 9.5 V5.5 H9.5 C10 2.5 13 2.5 13.5 5.5 H16.5 V9.5 Z" stroke="#9a9a9a" stroke-width="1.1" fill="none"/><rect x="15.5" y="14.5" width="13" height="17" stroke="#9a9a9a" stroke-width="1.1" fill="none"/></svg>
<svg class="s" style="left:82px;top:126px;" width="9" height="6" viewBox="0 0 9 6"><path d="M1.3 1.2 L4.5 4.4 L7.7 1.2" stroke="#8a8a8a" stroke-width="1.1" fill="none"/></svg>
<svg class="s" style="left:112px;top:69px;" width="14" height="18" viewBox="0 0 14 18"><path d="M3 1 L9.5 13 M11 1 L4.5 13" stroke="#8a8a8a" stroke-width="1.1" fill="none"/><circle cx="3.3" cy="14.5" r="1.9" stroke="#8a8a8a" stroke-width="1.1" fill="none"/><circle cx="10.7" cy="14.5" r="1.9" stroke="#8a8a8a" stroke-width="1.1" fill="none"/></svg>
<svg class="s" style="left:110px;top:92px;" width="18" height="18" viewBox="0 0 18 18"><path d="M8.5 14.5 H1.5 V1.5 H8 L9 2.5" stroke="#e8e8e8" stroke-width="1.1" fill="none"/><path d="M7.5 5.5 H13 L16.5 9 V16.5 H7.5 Z M13 5.5 V9 H16.5" stroke="#e8e8e8" stroke-width="1.1" fill="none"/><path d="M9.7 11.5 H14.1 M9.7 14 H14.1" stroke="#e8e8e8" stroke-width="0.9"/></svg>
<svg class="s" style="left:110px;top:115px;" width="18" height="17" viewBox="0 0 18 17"><path d="M1.5 8.5 L7 14.5 L12 9 L8 4.5 Z" stroke="#8a8a8a" stroke-width="1.1" fill="none"/><path d="M2.5 9 L8 7 L11 9.5 L7 13.5 Z" fill="#6a6a6a"/><path d="M10 6.5 L15.5 1.2 L17 2.7 L11.5 8" stroke="#8a8a8a" stroke-width="1.1" fill="none"/></svg>
<svg class="s" style="left:210px;top:147px;" width="10" height="10" viewBox="0 0 10 10"><path d="M1 8.5 V1 H8.5 M3 3 L8.5 8.5 M4 8.5 H8.5 V4" stroke="#e8e8e8" stroke-width="1.1" fill="none"/></svg>
<svg class="s" style="left:237px;top:71px;" width="30" height="30" viewBox="0 0 30 30"><path d="M1.5 1.5 H27.5 L17.5 14 V28.5 H11.5 V14 Z" stroke="#e8e8e8" stroke-width="1.1" fill="none"/></svg>
<div class="t" style="left:276.00px;top:70px;font-size:9.5px;color:#3a96dd;font-weight:bold;transform:scaleX(1.0145);">A</div>
<div class="t" style="left:276.00px;top:79px;font-size:9.5px;color:#e8e8e8;font-weight:bold;transform:scaleX(1.1207);">Z</div>
<svg class="s" style="left:284px;top:70px;" width="10" height="18" viewBox="0 0 10 18"><path d="M4.5 1 V16.5 M1.2 13 L4.5 16.5 L7.8 13" stroke="#e8e8e8" stroke-width="1.1" fill="none"/></svg>
<div class="t" style="left:276.00px;top:94px;font-size:9.5px;color:#e8e8e8;font-weight:bold;transform:scaleX(1.1207);">Z</div>
<div class="t" style="left:276.00px;top:103px;font-size:9.5px;color:#3a96dd;font-weight:bold;transform:scaleX(1.0145);">A</div>
<svg class="s" style="left:284px;top:94px;" width="10" height="18" viewBox="0 0 10 18"><path d="M4.5 1 V16.5 M1.2 13 L4.5 16.5 L7.8 13" stroke="#e8e8e8" stroke-width="1.1" fill="none"/></svg>
<div class="t" style="left:276.00px;top:118px;font-size:9.5px;color:#8a8a8a;font-weight:bold;transform:scaleX(1.0145);">A</div>
<div class="t" style="left:276.00px;top:127px;font-size:9.5px;color:#8a8a8a;font-weight:bold;transform:scaleX(1.1207);">Z</div>
<svg class="s" style="left:282px;top:120px;" width="12" height="12" viewBox="0 0 12 12"><path d="M1.5 8 L7.5 2 L10.5 5 L4.5 11 Z M4 5.5 L7 8.5" stroke="#8a8a8a" stroke-width="1.1" fill="none"/></svg>
<svg class="s" style="left:371px;top:70px;" width="18" height="18" viewBox="0 0 18 18"><path d="M6 1.5 H16.5 L10.5 9 V16.5 H6.5 V9 L4.5 7" stroke="#e8e8e8" stroke-width="1.1" fill="none"/><path d="M4.5 0.5 L1.5 5 H4 L2.5 9.5 L7 4 H4.5 L6 0.5Z" fill="#f3c13a"/></svg>
<svg class="s" style="left:371px;top:94px;" width="18" height="18" viewBox="0 0 18 18"><path d="M6.5 16.5 V9 L1.5 1.5 H16.5 L13 6" stroke="#e8e8e8" stroke-width="1.1" fill="none"/><circle cx="13" cy="12.3" r="2.9" stroke="#3a96dd" stroke-width="1.6" fill="none"/><circle cx="13" cy="12.3" r="0.9" fill="#3a96dd"/><path d="M13 8 V9 M13 15.5 V16.6 M9 12.3 H10 M16 12.3 H17.2" stroke="#3a96dd" stroke-width="1.4"/></svg>
<svg class="s" style="left:371px;top:118px;" width="18" height="18" viewBox="0 0 18 18"><path d="M1.5 1.5 H16.5 L10.5 9 V16.5 H6.5 V9 Z" stroke="#8a8a8a" stroke-width="1.1" fill="none"/></svg>
<svg class="s" style="left:442px;top:77px;" width="9" height="6" viewBox="0 0 9 6"><path d="M1.3 1.2 L4.5 4.4 L7.7 1.2" stroke="#e8e8e8" stroke-width="1.2" fill="none"/></svg>
<svg class="s" style="left:447px;top:101px;" width="9" height="6" viewBox="0 0 9 6"><path d="M1.3 1.2 L4.5 4.4 L7.7 1.2" stroke="#e8e8e8" stroke-width="1.2" fill="none"/></svg>
<svg class="s" style="left:488px;top:71px;" width="32" height="32" viewBox="0 0 32 32"><path d="M1.5 27 V1.5 H15" stroke="#e8e8e8" stroke-width="1.1" fill="none"/><path d="M13 28.5 H4.5 V4.5 H15.5 L22.5 11.5 V15 M15.5 4.5 V11.5 H22.5" stroke="#e8e8e8" stroke-width="1.1" fill="none"/><path d="M14 24 A7 7 0 0 1 27.5 20.5 M28 23.5 A7 7 0 0 1 14.5 26.5" stroke="#4fc466" stroke-width="1.3" fill="none"/><path d="M28 16.5 V21.5 H23" stroke="#4fc466" stroke-width="1.3" fill="none"/><path d="M14 31 V26 H19" stroke="#4fc466" stroke-width="1.3" fill="none"/></svg>
<svg class="s" style="left:503px;top:125px;" width="9" height="6" viewBox="0 0 9 6"><path d="M1.3 1.2 L4.5 4.4 L7.7 1.2" stroke="#e8e8e8" stroke-width="1.2" fill="none"/></svg>
<svg class="s" style="left:524px;top:71px;" width="18" height="18" viewBox="0 0 18 18"><path d="M1.5 13 V1.5 H15" stroke="#8a8a8a" stroke-width="1.1" fill="none"/><path d="M3.5 14.5 V3.5 H16.5 V10.5 M3.5 5.5 H16.5 M9.5 14.5 H3.5 M5.5 9 H6.5 M7.5 9 H9 M10.5 13 H16.5 M13.5 10 V16" stroke="#8a8a8a" stroke-width="1.1" fill="none"/></svg>
<svg class="s" style="left:524px;top:95px;" width="18" height="18" viewBox="0 0 18 18"><path d="M1.5 13 V1.5 H15" stroke="#8a8a8a" stroke-width="1.1" fill="none"/><path d="M3.5 12.5 V3.5 H16.5 V6 M3.5 5.5 H16.5 M5.5 9.5 H6" stroke="#8a8a8a" stroke-width="1.1" fill="none"/><path d="M7.5 7.5 H16.5 V16.5 H8.5 L7.5 15.5 Z M9.5 7.5 V10.5 H14.5 V7.5 M10.5 16.5 V13.5 H13.5 V16.5" stroke="#8a8a8a" stroke-width="1.1" fill="none"/></svg>
<svg class="s" style="left:526px;top:120px;" width="14" height="14" viewBox="0 0 14 14"><path d="M1 1 L13 13 M13 1 L1 13" stroke="#8a8a8a" stroke-width="1.1"/></svg>
<svg class="s" style="left:586px;top:124px;" width="9" height="6" viewBox="0 0 9 6"><path d="M1.3 1.2 L4.5 4.4 L7.7 1.2" stroke="#8a8a8a" stroke-width="1.1" fill="none"/></svg>
<svg class="s" style="left:603px;top:70px;" width="16" height="18" viewBox="0 0 16 18"><path d="M14 3 V1.8 H2 L8.5 9 L2 16.2 H14 V15" stroke="#e8e8e8" stroke-width="1.2" fill="none"/></svg>
<div class="t" style="left:604.00px;top:94px;font-size:10px;color:#8a8a8a;transform:scaleX(0.8696);">abc</div>
<svg class="s" style="left:605px;top:103px;" width="12" height="9" viewBox="0 0 12 9"><path d="M1.5 3.5 L5 7 L10.5 1.5" stroke="#8a8a8a" stroke-width="1.1" fill="none"/></svg>
<svg class="s" style="left:602px;top:118px;" width="18" height="18" viewBox="0 0 18 18"><rect x="1.5" y="1.5" width="15" height="15" stroke="#e8e8e8" stroke-width="1.1" fill="none"/><rect x="2" y="2" width="14" height="3" fill="#7a7a7a"/><rect x="2" y="8" width="14" height="3.5" fill="#1a64c8"/><path d="M2 5.5 H16 M2 8 H16 M2 11.5 H16 M6.5 5.5 V16 M11.5 5.5 V16" stroke="#e8e8e8" stroke-width="1" fill="none"/><path d="M2 7.5 H16 M2 12 H16" stroke="#5aa0ff" stroke-width="0.6"/></svg>
<svg class="s" style="left:652px;top:125px;" width="9" height="6" viewBox="0 0 9 6"><path d="M1.3 1.2 L4.5 4.4 L7.7 1.2" stroke="#e8e8e8" stroke-width="1.2" fill="none"/></svg>
<svg class="s" style="left:692px;top:71px;" width="32" height="32" viewBox="0 0 32 32"><circle cx="19.3" cy="11.6" r="10.5" stroke="#e8e8e8" stroke-width="1.1" fill="none"/><path d="M12 19 L1.2 29.7" stroke="#e8e8e8" stroke-width="1.1"/></svg>
<svg class="s" style="left:731px;top:69px;" width="17" height="18" viewBox="0 0 17 18"><path d="M4 5 C1 6 1 10.5 4.5 11.5 M2.5 13.5 L5 15.5 L2.5 17" stroke="#8a8a8a" stroke-width="1.1" fill="none"/><path d="M2 9.5 C2 13 3.5 15.5 5 15.5" stroke="#8a8a8a" stroke-width="1.1" fill="none"/></svg>
<div class="t" style="left:737.00px;top:71px;font-size:9px;color:#8a8a8a;transform:scaleX(1.2000);">b</div>
<div class="t" style="left:741.00px;top:80px;font-size:9px;color:#8a8a8a;transform:scaleX(1.1111);">c</div>
<svg class="s" style="left:731px;top:94px;" width="17" height="13" viewBox="0 0 17 13"><path d="M1 6.5 H15 M10 1.5 L15.2 6.5 L10 11.5" stroke="#3a96dd" stroke-width="1.3" fill="none"/></svg>
<svg class="s" style="left:732px;top:116px;" width="14" height="17" viewBox="0 0 14 17"><path d="M1.7 1.3 V13.5 L4.5 11 L7 15.5 L9 14.5 L7 10 H11 Z" stroke="#e8e8e8" stroke-width="1.1" fill="none"/></svg>
<svg class="s" style="left:784px;top:99px;" width="9" height="6" viewBox="0 0 9 6"><path d="M1.3 1.2 L4.5 4.4 L7.7 1.2" stroke="#e8e8e8" stroke-width="1.2" fill="none"/></svg>
<svg class="s" style="left:785px;top:122px;" width="9" height="6" viewBox="0 0 9 6"><path d="M1.3 1.2 L4.5 4.4 L7.7 1.2" stroke="#e8e8e8" stroke-width="1.2" fill="none"/></svg>
<div class="r" style="left:816px;top:76px;width:139px;height:23px;background:#262626;border:1px solid #4d4d4d;box-sizing:border-box;"></div>
<div class="r" style="left:957px;top:76px;width:55px;height:23px;background:#262626;border:1px solid #4d4d4d;box-sizing:border-box;"></div>
<svg class="s" style="left:944px;top:85px;" width="9" height="6" viewBox="0 0 9 6"><path d="M1.3 1.2 L4.5 4.4 L7.7 1.2" stroke="#8a8a8a" stroke-width="1.1" fill="none"/></svg>
<svg class="s" style="left:1001px;top:85px;" width="9" height="6" viewBox="0 0 9 6"><path d="M1.3 1.2 L4.5 4.4 L7.7 1.2" stroke="#8a8a8a" stroke-width="1.1" fill="none"/></svg>
<svg class="s" style="left:1016px;top:78px;" width="17" height="17" viewBox="0 0 17 17"><rect x="0.5" y="1" width="2.2" height="2.2" fill="#9a9a9a"/><rect x="0.5" y="7" width="2.2" height="2.2" fill="#9a9a9a"/><rect x="0.5" y="13" width="2.2" height="2.2" fill="#9a9a9a"/><path d="M5 2.1 H15.5 M5 8.1 H15.5 M5 14.1 H15.5" stroke="#9a9a9a" stroke-width="1.1"/></svg>
<svg class="s" style="left:1040px;top:78px;" width="17" height="17" viewBox="0 0 17 17"><path d="M6 2.1 H16.5 M6 8.1 H16.5 M6 14.1 H16.5" stroke="#9a9a9a" stroke-width="1.1"/></svg>
<div class="t" style="left:1040.50px;top:79px;font-size:6.5px;color:#9a9a9a;font-weight:bold;">1</div>
<div class="t" style="left:1040.50px;top:85px;font-size:6.5px;color:#9a9a9a;font-weight:bold;">2</div>
<div class="t" style="left:1040.50px;top:91px;font-size:6.5px;color:#9a9a9a;font-weight:bold;">3</div>
<div class="r" style="left:1064px;top:77px;width:1px;height:21px;background:#4a4a4a;"></div>
<div class="r" style="left:1119px;top:77px;width:1px;height:21px;background:#4a4a4a;"></div>
<svg class="s" style="left:1072px;top:78px;" width="16" height="16" viewBox="0 0 16 16"><path d="M1 1.6 H15 M8 7.6 H15 M1 13.6 H15 M1 7.6 H6 M4 5 L6.5 7.6 L4 10.2" stroke="#9a9a9a" stroke-width="1.1" fill="none"/></svg>
<svg class="s" style="left:1096px;top:78px;" width="16" height="16" viewBox="0 0 16 16"><path d="M1 1.6 H15 M8 7.6 H15 M1 13.6 H15 M2 7.6 H6.5 M4.5 5 L2 7.6 L4.5 10.2" stroke="#9a9a9a" stroke-width="1.1" fill="none"/></svg>
<svg class="s" style="left:1128px;top:80px;" width="16" height="12" viewBox="0 0 16 12"><path d="M1 2 L4.5 5.5 L1 9" stroke="#9a9a9a" stroke-width="1.1" fill="none"/><path d="M7.5 1.2 H13.5 M10 1.2 V11 M12.3 1.2 V11" stroke="#9a9a9a" stroke-width="1.2" fill="none"/><circle cx="8" cy="3.5" r="2.4" fill="#9a9a9a"/></svg>
<svg class="s" style="left:1149px;top:85px;" width="9" height="6" viewBox="0 0 9 6"><path d="M1.3 1.2 L4.5 4.4 L7.7 1.2" stroke="#8a8a8a" stroke-width="1.1" fill="none"/></svg>
<div class="t" style="left:823.50px;top:112px;font-size:13px;color:#9a9a9a;font-weight:bold;transform:scaleX(0.8511);">B</div>
<div class="t" style="left:847px;top:112px;font-size:13px;color:#9a9a9a;font-family:'Liberation Serif',serif;font-style:italic">I</div>
<div class="t" style="left:870.00px;top:113px;font-size:11.5px;color:#9a9a9a;transform:scaleX(1.0843);">U</div>
<div class="r" style="left:870px;top:124px;width:9px;height:1px;background:#9a9a9a;"></div>
<div class="r" style="left:890px;top:109px;width:1px;height:21px;background:#4a4a4a;"></div>
<div class="t" style="left:898.00px;top:110px;font-size:14px;color:#9a9a9a;transform:scaleX(1.6489);">A</div>
<div class="r" style="left:898px;top:123px;width:16px;height:4px;background:#6f6f6f;"></div>
<svg class="s" style="left:919px;top:117px;" width="9" height="6" viewBox="0 0 9 6"><path d="M1.3 1.2 L4.5 4.4 L7.7 1.2" stroke="#8a8a8a" stroke-width="1.1" fill="none"/></svg>
<svg class="s" style="left:937px;top:110px;" width="17" height="14" viewBox="0 0 17 14"><path d="M3 12 L5 8.5 L12 1.5 L15 4.5 L8 11.5 Z M5 8.5 L8 11.5" stroke="#9a9a9a" stroke-width="1.1" fill="none"/><path d="M1 13 L3 11 L5 12.5 Z" fill="#9a9a9a"/></svg>
<div class="r" style="left:937px;top:123px;width:16px;height:4px;background:#6f6f6f;"></div>
<svg class="s" style="left:958px;top:117px;" width="9" height="6" viewBox="0 0 9 6"><path d="M1.3 1.2 L4.5 4.4 L7.7 1.2" stroke="#8a8a8a" stroke-width="1.1" fill="none"/></svg>
<svg class="s" style="left:976px;top:110px;" width="17" height="14" viewBox="0 0 17 14"><path d="M2 7 L7 2 L12 7 L7.5 11.5 Z M7 2 C6 0 8 -0.5 8.5 1.5 V4" stroke="#9a9a9a" stroke-width="1.1" fill="none"/><path d="M12.5 5 C14.5 6 15 8 14.5 9.5" stroke="#9a9a9a" stroke-width="1.1" fill="none"/></svg>
<div class="r" style="left:976px;top:123px;width:16px;height:4px;background:#6f6f6f;"></div>
<svg class="s" style="left:997px;top:117px;" width="9" height="6" viewBox="0 0 9 6"><path d="M1.3 1.2 L4.5 4.4 L7.7 1.2" stroke="#8a8a8a" stroke-width="1.1" fill="none"/></svg>
<div class="r" style="left:1014px;top:109px;width:1px;height:21px;background:#4a4a4a;"></div>
<svg class="s" style="left:1022px;top:111px;" width="16" height="15" viewBox="0 0 16 15"><path d="M1 1.5 H15 M1 5.5 H11 M1 9.5 H15 M1 13.5 H11 " stroke="#9a9a9a" stroke-width="1.1"/></svg>
<svg class="s" style="left:1046px;top:111px;" width="16" height="15" viewBox="0 0 16 15"><path d="M1.0 1.5 H15.0 M3.0 5.5 H13.0 M1.0 9.5 H15.0 M3.0 13.5 H13.0 " stroke="#9a9a9a" stroke-width="1.1"/></svg>
<svg class="s" style="left:1070px;top:111px;" width="16" height="15" viewBox="0 0 16 15"><path d="M1 1.5 H15 M5 5.5 H15 M1 9.5 H15 M5 13.5 H15 " stroke="#9a9a9a" stroke-width="1.1"/></svg>
<div class="r" style="left:1093px;top:109px;width:1px;height:21px;background:#4a4a4a;"></div>
<svg class="s" style="left:1100px;top:110px;" width="17" height="17" viewBox="0 0 17 17"><rect x="1" y="1" width="15" height="15" stroke="#9a9a9a" stroke-width="1.2" fill="none"/><path d="M1 16 L16 1 M8.5 16 V8.5 H16" stroke="#9a9a9a" stroke-width="1.1" fill="none"/></svg>
<svg class="s" style="left:1120px;top:117px;" width="9" height="6" viewBox="0 0 9 6"><path d="M1.3 1.2 L4.5 4.4 L7.7 1.2" stroke="#8a8a8a" stroke-width="1.1" fill="none"/></svg>
<div class="r" style="left:1138px;top:109px;width:1px;height:21px;background:#4a4a4a;"></div>
<svg class="s" style="left:1145px;top:110px;" width="18" height="18" viewBox="0 0 18 18"><rect x="1.5" y="1.5" width="15" height="9.5" stroke="#9a9a9a" stroke-width="1.1" fill="none"/><rect x="2" y="2" width="14" height="3.5" fill="#6a6a6a"/><path d="M1.5 5.8 H16.5 M6.5 1.5 V11 M11.5 1.5 V11" stroke="#9a9a9a" stroke-width="1.1"/><rect x="1" y="12.8" width="16" height="3" fill="#6f6f6f"/></svg>
<svg class="s" style="left:1166px;top:117px;" width="9" height="6" viewBox="0 0 9 6"><path d="M1.3 1.2 L4.5 4.4 L7.7 1.2" stroke="#8a8a8a" stroke-width="1.1" fill="none"/></svg>
<svg class="s" style="left:1175px;top:147px;" width="10" height="10" viewBox="0 0 10 10"><path d="M1 8.5 V1 H8.5 M3 3 L8.5 8.5 M4 8.5 H8.5 V4" stroke="#e8e8e8" stroke-width="1.1" fill="none"/></svg>
<svg class="s" style="left:1900px;top:148px;" width="13" height="8" viewBox="0 0 13 8"><path d="M1 6.5 L6.5 1.2 L12 6.5" stroke="#e0e0e0" stroke-width="1.2" fill="none"/></svg>
<svg class="s" style="left:15px;top:238px;" width="16" height="13" viewBox="0 0 16 13"><rect x="0" y="0" width="16" height="13" fill="#2c4a6c"/><rect x="0" y="0" width="15" height="12" fill="#a9b8d4"/><rect x="0" y="0" width="15" height="2.6" fill="#6682bd"/><rect x="1" y="3.5" width="4" height="2" fill="#fff"/><rect x="6" y="3.5" width="4" height="2" fill="#fff"/><rect x="11" y="3.5" width="3.5" height="2" fill="#eef3ff"/><rect x="1" y="6.5" width="4" height="2" fill="#fff"/><rect x="6" y="6.5" width="4" height="2" fill="#fff"/><rect x="11" y="6.5" width="3.5" height="2" fill="#eef3ff"/><rect x="1" y="9.5" width="4" height="2" fill="#fff"/><rect x="6" y="9.5" width="4" height="2" fill="#fff"/><rect x="11" y="9.5" width="3.5" height="2" fill="#eef3ff"/></svg>
<svg class="s" style="left:15px;top:262px;" width="16" height="13" viewBox="0 0 16 13"><rect x="0" y="0" width="16" height="13" fill="#2c4a6c"/><rect x="0" y="0" width="15" height="12" fill="#a9b8d4"/><rect x="0" y="0" width="15" height="2.6" fill="#6682bd"/><rect x="1" y="3.5" width="4" height="2" fill="#fff"/><rect x="6" y="3.5" width="4" height="2" fill="#fff"/><rect x="11" y="3.5" width="3.5" height="2" fill="#eef3ff"/><rect x="1" y="6.5" width="4" height="2" fill="#fff"/><rect x="6" y="6.5" width="4" height="2" fill="#fff"/><rect x="11" y="6.5" width="3.5" height="2" fill="#eef3ff"/><rect x="1" y="9.5" width="4" height="2" fill="#fff"/><rect x="6" y="9.5" width="4" height="2" fill="#fff"/><rect x="11" y="9.5" width="3.5" height="2" fill="#eef3ff"/></svg>
<svg class="s" style="left:15px;top:286px;" width="16" height="13" viewBox="0 0 16 13"><rect x="0" y="0" width="16" height="13" fill="#2c4a6c"/><rect x="0" y="0" width="15" height="12" fill="#a9b8d4"/><rect x="0" y="0" width="15" height="2.6" fill="#6682bd"/><rect x="1" y="3.5" width="4" height="2" fill="#fff"/><rect x="6" y="3.5" width="4" height="2" fill="#fff"/><rect x="11" y="3.5" width="3.5" height="2" fill="#eef3ff"/><rect x="1" y="6.5" width="4" height="2" fill="#fff"/><rect x="6" y="6.5" width="4" height="2" fill="#fff"/><rect x="11" y="6.5" width="3.5" height="2" fill="#eef3ff"/><rect x="1" y="9.5" width="4" height="2" fill="#fff"/><rect x="6" y="9.5" width="4" height="2" fill="#fff"/><rect x="11" y="9.5" width="3.5" height="2" fill="#eef3ff"/></svg>
<svg class="s" style="left:15px;top:328px;" width="16" height="15" viewBox="0 0 16 15"><rect x="5.5" y="0" width="10.5" height="11" fill="#2a4a66"/><rect x="5" y="0" width="10" height="10.5" fill="#f4f7ff"/><rect x="5" y="0" width="10" height="3" fill="#4a9aa3"/><rect x="12" y="4.5" width="2" height="1" fill="#8090a8"/><rect x="12" y="6.5" width="2" height="1" fill="#8090a8"/><rect x="12" y="8.5" width="2" height="1" fill="#8090a8"/><rect x="0.5" y="4" width="10.5" height="11" fill="#2a4a66"/><rect x="0" y="4" width="10.5" height="10.5" fill="#f4f7ff"/><rect x="0" y="4" width="10.5" height="3" fill="#4a9aa3"/><rect x="2" y="8.5" width="2" height="1" fill="#8090a8"/><rect x="2" y="10.5" width="2" height="1" fill="#8090a8"/><rect x="2" y="12.5" width="2" height="1" fill="#8090a8"/><rect x="7" y="8.5" width="2" height="1" fill="#8090a8"/><rect x="7" y="12.5" width="2" height="1" fill="#8090a8"/></svg>
<svg class="s" style="left:15px;top:352px;" width="16" height="15" viewBox="0 0 16 15"><rect x="5.5" y="0" width="10.5" height="11" fill="#2a4a66"/><rect x="5" y="0" width="10" height="10.5" fill="#f4f7ff"/><rect x="5" y="0" width="10" height="3" fill="#4a9aa3"/><rect x="12" y="4.5" width="2" height="1" fill="#8090a8"/><rect x="12" y="6.5" width="2" height="1" fill="#8090a8"/><rect x="12" y="8.5" width="2" height="1" fill="#8090a8"/><rect x="0.5" y="4" width="10.5" height="11" fill="#2a4a66"/><rect x="0" y="4" width="10.5" height="10.5" fill="#f4f7ff"/><rect x="0" y="4" width="10.5" height="3" fill="#4a9aa3"/><rect x="2" y="8.5" width="2" height="1" fill="#8090a8"/><rect x="2" y="10.5" width="2" height="1" fill="#8090a8"/><rect x="2" y="12.5" width="2" height="1" fill="#8090a8"/><rect x="7" y="8.5" width="2" height="1" fill="#8090a8"/><rect x="7" y="12.5" width="2" height="1" fill="#8090a8"/></svg>
<svg class="s" style="left:15px;top:376px;" width="16" height="15" viewBox="0 0 16 15"><rect x="5.5" y="0" width="10.5" height="11" fill="#2a4a66"/><rect x="5" y="0" width="10" height="10.5" fill="#f4f7ff"/><rect x="5" y="0" width="10" height="3" fill="#4a9aa3"/><rect x="12" y="4.5" width="2" height="1" fill="#8090a8"/><rect x="12" y="6.5" width="2" height="1" fill="#8090a8"/><rect x="12" y="8.5" width="2" height="1" fill="#8090a8"/><rect x="0.5" y="4" width="10.5" height="11" fill="#2a4a66"/><rect x="0" y="4" width="10.5" height="10.5" fill="#f4f7ff"/><rect x="0" y="4" width="10.5" height="3" fill="#4a9aa3"/><rect x="2" y="8.5" width="2" height="1" fill="#8090a8"/><rect x="2" y="10.5" width="2" height="1" fill="#8090a8"/><rect x="2" y="12.5" width="2" height="1" fill="#8090a8"/><rect x="7" y="8.5" width="2" height="1" fill="#8090a8"/><rect x="7" y="12.5" width="2" height="1" fill="#8090a8"/></svg>
<svg class="s" style="left:15px;top:400px;" width="16" height="15" viewBox="0 0 16 15"><rect x="5.5" y="0" width="10.5" height="11" fill="#2a4a66"/><rect x="5" y="0" width="10" height="10.5" fill="#f4f7ff"/><rect x="5" y="0" width="10" height="3" fill="#4a9aa3"/><rect x="12" y="4.5" width="2" height="1" fill="#8090a8"/><rect x="12" y="6.5" width="2" height="1" fill="#8090a8"/><rect x="12" y="8.5" width="2" height="1" fill="#8090a8"/><rect x="0.5" y="4" width="10.5" height="11" fill="#2a4a66"/><rect x="0" y="4" width="10.5" height="10.5" fill="#f4f7ff"/><rect x="0" y="4" width="10.5" height="3" fill="#4a9aa3"/><rect x="2" y="8.5" width="2" height="1" fill="#8090a8"/><rect x="2" y="10.5" width="2" height="1" fill="#8090a8"/><rect x="2" y="12.5" width="2" height="1" fill="#8090a8"/><rect x="7" y="8.5" width="2" height="1" fill="#8090a8"/><rect x="7" y="12.5" width="2" height="1" fill="#8090a8"/></svg>
<svg class="s" style="left:15px;top:424px;" width="16" height="15" viewBox="0 0 16 15"><rect x="5.5" y="0" width="10.5" height="11" fill="#2a4a66"/><rect x="5" y="0" width="10" height="10.5" fill="#f4f7ff"/><rect x="5" y="0" width="10" height="3" fill="#4a9aa3"/><rect x="12" y="4.5" width="2" height="1" fill="#8090a8"/><rect x="12" y="6.5" width="2" height="1" fill="#8090a8"/><rect x="12" y="8.5" width="2" height="1" fill="#8090a8"/><rect x="0.5" y="4" width="10.5" height="11" fill="#2a4a66"/><rect x="0" y="4" width="10.5" height="10.5" fill="#f4f7ff"/><rect x="0" y="4" width="10.5" height="3" fill="#4a9aa3"/><rect x="2" y="8.5" width="2" height="1" fill="#8090a8"/><rect x="2" y="10.5" width="2" height="1" fill="#8090a8"/><rect x="2" y="12.5" width="2" height="1" fill="#8090a8"/><rect x="7" y="8.5" width="2" height="1" fill="#8090a8"/><rect x="7" y="12.5" width="2" height="1" fill="#8090a8"/></svg>
<svg class="s" style="left:15px;top:448px;" width="16" height="15" viewBox="0 0 16 15"><rect x="5.5" y="0" width="10.5" height="11" fill="#2a4a66"/><rect x="5" y="0" width="10" height="10.5" fill="#f4f7ff"/><rect x="5" y="0" width="10" height="3" fill="#4a9aa3"/><rect x="12" y="4.5" width="2" height="1" fill="#8090a8"/><rect x="12" y="6.5" width="2" height="1" fill="#8090a8"/><rect x="12" y="8.5" width="2" height="1" fill="#8090a8"/><rect x="0.5" y="4" width="10.5" height="11" fill="#2a4a66"/><rect x="0" y="4" width="10.5" height="10.5" fill="#f4f7ff"/><rect x="0" y="4" width="10.5" height="3" fill="#4a9aa3"/><rect x="2" y="8.5" width="2" height="1" fill="#8090a8"/><rect x="2" y="10.5" width="2" height="1" fill="#8090a8"/><rect x="2" y="12.5" width="2" height="1" fill="#8090a8"/><rect x="7" y="8.5" width="2" height="1" fill="#8090a8"/><rect x="7" y="12.5" width="2" height="1" fill="#8090a8"/></svg>
<svg class="s" style="left:15px;top:490px;" width="15" height="14" viewBox="0 0 15 14"><rect x="0" y="0" width="15" height="14" fill="#2c4468"/><rect x="0" y="0" width="14.5" height="13" fill="#eef2fb"/><rect x="0" y="0" width="15" height="3" fill="#c9457c"/><rect x="0" y="0" width="15" height="1.3" fill="#e98db2"/><rect x="2" y="4.5" width="4" height="1.3" fill="#5a6f9a"/><rect x="2" y="8.5" width="4" height="1.3" fill="#5a6f9a"/><rect x="7.5" y="4.5" width="5" height="3" fill="none" stroke="#5a6a8a" stroke-width="1"/><rect x="7.5" y="8.5" width="5" height="3" fill="none" stroke="#5a6a8a" stroke-width="1"/></svg>
<svg class="s" style="left:15px;top:514px;" width="15" height="14" viewBox="0 0 15 14"><rect x="0" y="0" width="15" height="14" fill="#2c4468"/><rect x="0" y="0" width="14.5" height="13" fill="#eef2fb"/><rect x="0" y="0" width="15" height="3" fill="#c9457c"/><rect x="0" y="0" width="15" height="1.3" fill="#e98db2"/><rect x="2" y="4.5" width="4" height="1.3" fill="#5a6f9a"/><rect x="2" y="8.5" width="4" height="1.3" fill="#5a6f9a"/><rect x="7.5" y="4.5" width="5" height="3" fill="none" stroke="#5a6a8a" stroke-width="1"/><rect x="7.5" y="8.5" width="5" height="3" fill="none" stroke="#5a6a8a" stroke-width="1"/></svg>
<svg class="s" style="left:15px;top:538px;" width="15" height="14" viewBox="0 0 15 14"><rect x="0" y="0" width="15" height="14" fill="#2c4468"/><rect x="0" y="0" width="14.5" height="13" fill="#eef2fb"/><rect x="0" y="0" width="15" height="3" fill="#c9457c"/><rect x="0" y="0" width="15" height="1.3" fill="#e98db2"/><rect x="2" y="4.5" width="4" height="1.3" fill="#5a6f9a"/><rect x="2" y="8.5" width="4" height="1.3" fill="#5a6f9a"/><rect x="7.5" y="4.5" width="5" height="3" fill="none" stroke="#5a6a8a" stroke-width="1"/><rect x="7.5" y="8.5" width="5" height="3" fill="none" stroke="#5a6a8a" stroke-width="1"/></svg>
<svg class="s" style="left:15px;top:580px;" width="14" height="13" viewBox="0 0 14 13"><defs><linearGradient id="rg" x1="0" y1="0" x2="1" y2="1"><stop offset="0" stop-color="#a6dca0"/><stop offset="1" stop-color="#3f8f45"/></linearGradient></defs><rect x="2" y="0" width="11" height="13" fill="url(#rg)"/><rect x="4.5" y="2.5" width="6" height="3" fill="#9fd39a" stroke="#4f9a52" stroke-width="0.8"/><path d="M0.8 1.5 H2.5 M0.8 3.5 H2.5 M0.8 5.5 H2.5 M0.8 7.5 H2.5 M0.8 9.5 H2.5 M0.8 11.5 H2.5" stroke="#f0f0f0" stroke-width="1.1"/></svg>
<svg class="s" style="left:15px;top:604px;" width="14" height="13" viewBox="0 0 14 13"><defs><linearGradient id="rg" x1="0" y1="0" x2="1" y2="1"><stop offset="0" stop-color="#a6dca0"/><stop offset="1" stop-color="#3f8f45"/></linearGradient></defs><rect x="2" y="0" width="11" height="13" fill="url(#rg)"/><rect x="4.5" y="2.5" width="6" height="3" fill="#9fd39a" stroke="#4f9a52" stroke-width="0.8"/><path d="M0.8 1.5 H2.5 M0.8 3.5 H2.5 M0.8 5.5 H2.5 M0.8 7.5 H2.5 M0.8 9.5 H2.5 M0.8 11.5 H2.5" stroke="#f0f0f0" stroke-width="1.1"/></svg>
<svg class="s" style="left:15px;top:628px;" width="14" height="13" viewBox="0 0 14 13"><defs><linearGradient id="rg" x1="0" y1="0" x2="1" y2="1"><stop offset="0" stop-color="#a6dca0"/><stop offset="1" stop-color="#3f8f45"/></linearGradient></defs><rect x="2" y="0" width="11" height="13" fill="url(#rg)"/><rect x="4.5" y="2.5" width="6" height="3" fill="#9fd39a" stroke="#4f9a52" stroke-width="0.8"/><path d="M0.8 1.5 H2.5 M0.8 3.5 H2.5 M0.8 5.5 H2.5 M0.8 7.5 H2.5 M0.8 9.5 H2.5 M0.8 11.5 H2.5" stroke="#f0f0f0" stroke-width="1.1"/></svg>
<svg class="s" style="left:15px;top:652px;" width="14" height="13" viewBox="0 0 14 13"><defs><linearGradient id="rg" x1="0" y1="0" x2="1" y2="1"><stop offset="0" stop-color="#a6dca0"/><stop offset="1" stop-color="#3f8f45"/></linearGradient></defs><rect x="2" y="0" width="11" height="13" fill="url(#rg)"/><rect x="4.5" y="2.5" width="6" height="3" fill="#9fd39a" stroke="#4f9a52" stroke-width="0.8"/><path d="M0.8 1.5 H2.5 M0.8 3.5 H2.5 M0.8 5.5 H2.5 M0.8 7.5 H2.5 M0.8 9.5 H2.5 M0.8 11.5 H2.5" stroke="#f0f0f0" stroke-width="1.1"/></svg>
<svg class="s" style="left:15px;top:676px;" width="14" height="13" viewBox="0 0 14 13"><defs><linearGradient id="rg" x1="0" y1="0" x2="1" y2="1"><stop offset="0" stop-color="#a6dca0"/><stop offset="1" stop-color="#3f8f45"/></linearGradient></defs><rect x="2" y="0" width="11" height="13" fill="url(#rg)"/><rect x="4.5" y="2.5" width="6" height="3" fill="#9fd39a" stroke="#4f9a52" stroke-width="0.8"/><path d="M0.8 1.5 H2.5 M0.8 3.5 H2.5 M0.8 5.5 H2.5 M0.8 7.5 H2.5 M0.8 9.5 H2.5 M0.8 11.5 H2.5" stroke="#f0f0f0" stroke-width="1.1"/></svg>
<svg class="s" style="left:15px;top:700px;" width="14" height="13" viewBox="0 0 14 13"><defs><linearGradient id="rg" x1="0" y1="0" x2="1" y2="1"><stop offset="0" stop-color="#a6dca0"/><stop offset="1" stop-color="#3f8f45"/></linearGradient></defs><rect x="2" y="0" width="11" height="13" fill="url(#rg)"/><rect x="4.5" y="2.5" width="6" height="3" fill="#9fd39a" stroke="#4f9a52" stroke-width="0.8"/><path d="M0.8 1.5 H2.5 M0.8 3.5 H2.5 M0.8 5.5 H2.5 M0.8 7.5 H2.5 M0.8 9.5 H2.5 M0.8 11.5 H2.5" stroke="#f0f0f0" stroke-width="1.1"/></svg>
<svg class="s" style="left:15px;top:724px;" width="14" height="13" viewBox="0 0 14 13"><defs><linearGradient id="rg" x1="0" y1="0" x2="1" y2="1"><stop offset="0" stop-color="#a6dca0"/><stop offset="1" stop-color="#3f8f45"/></linearGradient></defs><rect x="2" y="0" width="11" height="13" fill="url(#rg)"/><rect x="4.5" y="2.5" width="6" height="3" fill="#9fd39a" stroke="#4f9a52" stroke-width="0.8"/><path d="M0.8 1.5 H2.5 M0.8 3.5 H2.5 M0.8 5.5 H2.5 M0.8 7.5 H2.5 M0.8 9.5 H2.5 M0.8 11.5 H2.5" stroke="#f0f0f0" stroke-width="1.1"/></svg>
<svg class="s" style="left:188px;top:219px;" width="11" height="12" viewBox="0 0 11 12"><path d="M2 6.5 L5.5 2.8 L9 6.5 M2 10.8 L5.5 7.1 L9 10.8" stroke="#686b74" stroke-width="2.9" stroke-linecap="square" fill="none"/></svg>
<svg class="s" style="left:188px;top:309px;" width="11" height="12" viewBox="0 0 11 12"><path d="M2 6.5 L5.5 2.8 L9 6.5 M2 10.8 L5.5 7.1 L9 10.8" stroke="#686b74" stroke-width="2.9" stroke-linecap="square" fill="none"/></svg>
<svg class="s" style="left:188px;top:471px;" width="11" height="12" viewBox="0 0 11 12"><path d="M2 6.5 L5.5 2.8 L9 6.5 M2 10.8 L5.5 7.1 L9 10.8" stroke="#686b74" stroke-width="2.9" stroke-linecap="square" fill="none"/></svg>
<svg class="s" style="left:188px;top:561px;" width="11" height="12" viewBox="0 0 11 12"><path d="M2 6.5 L5.5 2.8 L9 6.5 M2 10.8 L5.5 7.1 L9 10.8" stroke="#686b74" stroke-width="2.9" stroke-linecap="square" fill="none"/></svg>
<svg class="s" style="left:174px;top:169px;" width="15" height="15" viewBox="0 0 15 15"><circle cx="7.5" cy="7.5" r="6.4" stroke="#dcdcdc" stroke-width="1.1" fill="none"/><path d="M4.3 6 H10.7 L7.5 9.3 Z" fill="#dcdcdc"/></svg>
<svg class="s" style="left:194px;top:172px;" width="12" height="11" viewBox="0 0 12 11"><path d="M5.8 1.5 L2.2 5.5 L5.8 9.5 M10.2 1.5 L6.6 5.5 L10.2 9.5" stroke="#686b74" stroke-width="2.8" stroke-linecap="square" fill="none"/></svg>
<div class="r" style="left:190px;top:195px;width:1px;height:19px;background:#5a5a5a;"></div>
<div class="r" style="left:191px;top:196px;width:16px;height:17px;background:#262626;"></div>
<svg class="s" style="left:191px;top:196px;" width="17" height="18" viewBox="0 0 17 18"><circle cx="10.5" cy="5.8" r="4.6" stroke="#dcdcdc" stroke-width="1.1" fill="none"/><path d="M7.2 9.2 L1.5 15" stroke="#dcdcdc" stroke-width="1.2"/></svg>
<svg class="s" style="left:221px;top:165px;" width="15" height="14" viewBox="0 0 15 14"><rect x="0" y="0" width="15" height="14" fill="#2c4468"/><rect x="0" y="0" width="14.5" height="13" fill="#eef2fb"/><rect x="0" y="0" width="15" height="3" fill="#c9457c"/><rect x="0" y="0" width="15" height="1.3" fill="#e98db2"/><rect x="2" y="4.5" width="4" height="1.3" fill="#5a6f9a"/><rect x="2" y="8.5" width="4" height="1.3" fill="#5a6f9a"/><rect x="7.5" y="4.5" width="5" height="3" fill="none" stroke="#5a6a8a" stroke-width="1"/><rect x="7.5" y="8.5" width="5" height="3" fill="none" stroke="#5a6a8a" stroke-width="1"/></svg>
<svg class="s" style="left:299px;top:167px;" width="12" height="12" viewBox="0 0 12 12"><path d="M1 1 L11 11 M11 1 L1 11" stroke="#e0e0e0" stroke-width="1.1"/></svg>
<svg class="s" style="left:222px;top:222px;" width="8" height="13" viewBox="0 0 8 13"><path d="M0.5 0.5 L7.5 6.5 L0.5 12.5 Z" fill="#fff"/></svg>
<svg class="s" style="left:314px;top:841px;" width="10" height="8" viewBox="0 0 10 8"><path d="M1 1.5 H9 L5 6.5 Z" stroke="#e8e8e8" stroke-width="1" fill="none"/></svg>
<svg class="s" style="left:408px;top:841px;" width="10" height="8" viewBox="0 0 10 8"><path d="M1 1.5 H9 L5 6.5 Z" stroke="#e8e8e8" stroke-width="1" fill="none"/></svg>
<svg class="s" style="left:502px;top:841px;" width="10" height="8" viewBox="0 0 10 8"><path d="M1 1.5 H9 L5 6.5 Z" stroke="#e8e8e8" stroke-width="1" fill="none"/></svg>
<svg class="s" style="left:616px;top:841px;" width="10" height="8" viewBox="0 0 10 8"><path d="M1 1.5 H9 L5 6.5 Z" stroke="#e8e8e8" stroke-width="1" fill="none"/></svg>
<svg class="s" style="left:819px;top:841px;" width="10" height="8" viewBox="0 0 10 8"><path d="M1 1.5 H9 L5 6.5 Z" stroke="#e8e8e8" stroke-width="1" fill="none"/></svg>
<svg class="s" style="left:1010px;top:841px;" width="10" height="8" viewBox="0 0 10 8"><path d="M1 1.5 H9 L5 6.5 Z" stroke="#e8e8e8" stroke-width="1" fill="none"/></svg>
<svg class="s" style="left:215px;top:835px;" width="19" height="21" viewBox="0 0 19 21"><path d="M4 18 L15.5 7" stroke="#a8b8d8" stroke-width="1"/></svg>
<div class="r" style="left:404px;top:858px;width:17px;height:20px;background:#e3e3e3;border:1px solid #a0a0a0;box-sizing:border-box;"></div>
<svg class="s" style="left:406px;top:864px;" width="12" height="8" viewBox="0 0 12 8"><path d="M1.5 1.5 L6 6 L10.5 1.5" stroke="#606060" stroke-width="1" fill="none"/></svg>
<svg class="s" style="left:1050px;top:830px;" width="4" height="4" viewBox="0 0 4 4"><path d="M0 3 H2 V1 H3" stroke="#fff" stroke-width="1.2" fill="none"/><path d="M2 1 H3.5 V3" stroke="#111" stroke-width="0.8" fill="none"/></svg>
<svg class="s" style="left:1054px;top:830px;" width="4" height="4" viewBox="0 0 4 4"><path d="M0 3 H2 V1 H3" stroke="#fff" stroke-width="1.2" fill="none"/><path d="M2 1 H3.5 V3" stroke="#111" stroke-width="0.8" fill="none"/></svg>
<svg class="s" style="left:1058px;top:830px;" width="4" height="4" viewBox="0 0 4 4"><path d="M0 3 H2 V1 H3" stroke="#fff" stroke-width="1.2" fill="none"/><path d="M2 1 H3.5 V3" stroke="#111" stroke-width="0.8" fill="none"/></svg>
<svg class="s" style="left:1062px;top:830px;" width="4" height="4" viewBox="0 0 4 4"><path d="M0 3 H2 V1 H3" stroke="#fff" stroke-width="1.2" fill="none"/><path d="M2 1 H3.5 V3" stroke="#111" stroke-width="0.8" fill="none"/></svg>
<svg class="s" style="left:1066px;top:830px;" width="4" height="4" viewBox="0 0 4 4"><path d="M0 3 H2 V1 H3" stroke="#fff" stroke-width="1.2" fill="none"/><path d="M2 1 H3.5 V3" stroke="#111" stroke-width="0.8" fill="none"/></svg>
<svg class="s" style="left:1070px;top:830px;" width="4" height="4" viewBox="0 0 4 4"><path d="M0 3 H2 V1 H3" stroke="#fff" stroke-width="1.2" fill="none"/><path d="M2 1 H3.5 V3" stroke="#111" stroke-width="0.8" fill="none"/></svg>
<svg class="s" style="left:1074px;top:830px;" width="4" height="4" viewBox="0 0 4 4"><path d="M0 3 H2 V1 H3" stroke="#fff" stroke-width="1.2" fill="none"/><path d="M2 1 H3.5 V3" stroke="#111" stroke-width="0.8" fill="none"/></svg>
<svg class="s" style="left:1078px;top:830px;" width="4" height="4" viewBox="0 0 4 4"><path d="M0 3 H2 V1 H3" stroke="#fff" stroke-width="1.2" fill="none"/><path d="M2 1 H3.5 V3" stroke="#111" stroke-width="0.8" fill="none"/></svg>
<svg class="s" style="left:1082px;top:830px;" width="4" height="4" viewBox="0 0 4 4"><path d="M0 3 H2 V1 H3" stroke="#fff" stroke-width="1.2" fill="none"/><path d="M2 1 H3.5 V3" stroke="#111" stroke-width="0.8" fill="none"/></svg>
<div class="r" style="left:1903px;top:834px;width:17px;height:165px;background:#262626;"></div>
<div class="r" style="left:1903px;top:835px;width:17px;height:164px;background:#363636;"></div>
<div class="r" style="left:1905px;top:838px;width:13px;height:13px;background:#535353;"></div>
<svg class="s" style="left:1906px;top:840px;" width="11" height="8" viewBox="0 0 11 8"><path d="M1.5 6 L5.5 2 L9.5 6 Z" fill="#a0a0a0"/></svg>
<div class="r" style="left:1905px;top:853px;width:13px;height:15px;background:#535353;"></div>
<div class="r" style="left:1905px;top:982px;width:13px;height:14px;background:#535353;"></div>
<svg class="s" style="left:1906px;top:985px;" width="11" height="8" viewBox="0 0 11 8"><path d="M1.5 2 L5.5 6 L9.5 2 Z" fill="#a0a0a0"/></svg>
<svg class="s" style="left:264px;top:1003px;" width="10" height="10" viewBox="0 0 10 10"><path d="M1.5 1 V9" stroke="#e0e0e0" stroke-width="1.2"/><path d="M8.5 1.5 L3 5 L8.5 8.5 Z" fill="#e0e0e0"/></svg>
<svg class="s" style="left:282px;top:1003px;" width="8" height="10" viewBox="0 0 8 10"><path d="M6.5 1.5 L1.5 5 L6.5 8.5 Z" fill="#6a6a6a"/></svg>
<svg class="s" style="left:352px;top:1003px;" width="8" height="10" viewBox="0 0 8 10"><path d="M1.5 1.5 L6.5 5 L1.5 8.5 Z" fill="#e0e0e0"/></svg>
<svg class="s" style="left:367px;top:1003px;" width="11" height="10" viewBox="0 0 11 10"><path d="M9 1 V9" stroke="#e0e0e0" stroke-width="1.2"/><path d="M1.5 1.5 L7 5 L1.5 8.5 Z" fill="#e0e0e0"/></svg>
<svg class="s" style="left:383px;top:1002px;" width="14" height="12" viewBox="0 0 14 12"><path d="M1.5 2.5 L6 6 L1.5 9.5 Z" fill="#6a6a6a"/><path d="M10.5 2 V10 M7 6 H14 M8 3 L13 9 M13 3 L8 9" stroke="#6a6a6a" stroke-width="1"/></svg>
<div class="r" style="left:403px;top:1001px;width:1px;height:15px;background:#3e3e3e;"></div>
<svg class="s" style="left:410px;top:1000px;" width="18" height="17" viewBox="0 0 18 17"><path d="M1 1 H14 L9 7 V13 H6 V7 Z" fill="#7a7a7a"/><path d="M10 10 L15 15.5 M15 10 L10 15.5" stroke="#9a9a9a" stroke-width="1.4"/></svg>
<div class="r" style="left:480px;top:1001px;width:1px;height:15px;background:#3e3e3e;"></div>
<svg class="s" style="left:1850px;top:1021px;" width="18" height="16" viewBox="0 0 18 16"><rect x="0.5" y="0.5" width="16" height="14" stroke="#f0f0f0" stroke-width="1.1" fill="none"/><path d="M0.5 3.5 H16.5 M3 7 H6 M3 11 H6" stroke="#f0f0f0" stroke-width="1" fill="none"/><rect x="8.5" y="5.5" width="6" height="3" stroke="#f0f0f0" stroke-width="1" fill="none"/><rect x="8.5" y="9.5" width="6" height="3" stroke="#f0f0f0" stroke-width="1" fill="none"/></svg>
<svg class="s" style="left:1890px;top:1020px;" width="18" height="18" viewBox="0 0 18 18"><path d="M1.5 1.5 V16.5 H16.5 Z M4.5 9.5 V13.5 H8.5 Z M11.5 1.5 H16.5 V16.5 M12 4 H14 M12 6.5 H14 M12 9 H14 M12 11.5 H14" stroke="#f0f0f0" stroke-width="1.1" fill="none"/></svg>
</body></html>
